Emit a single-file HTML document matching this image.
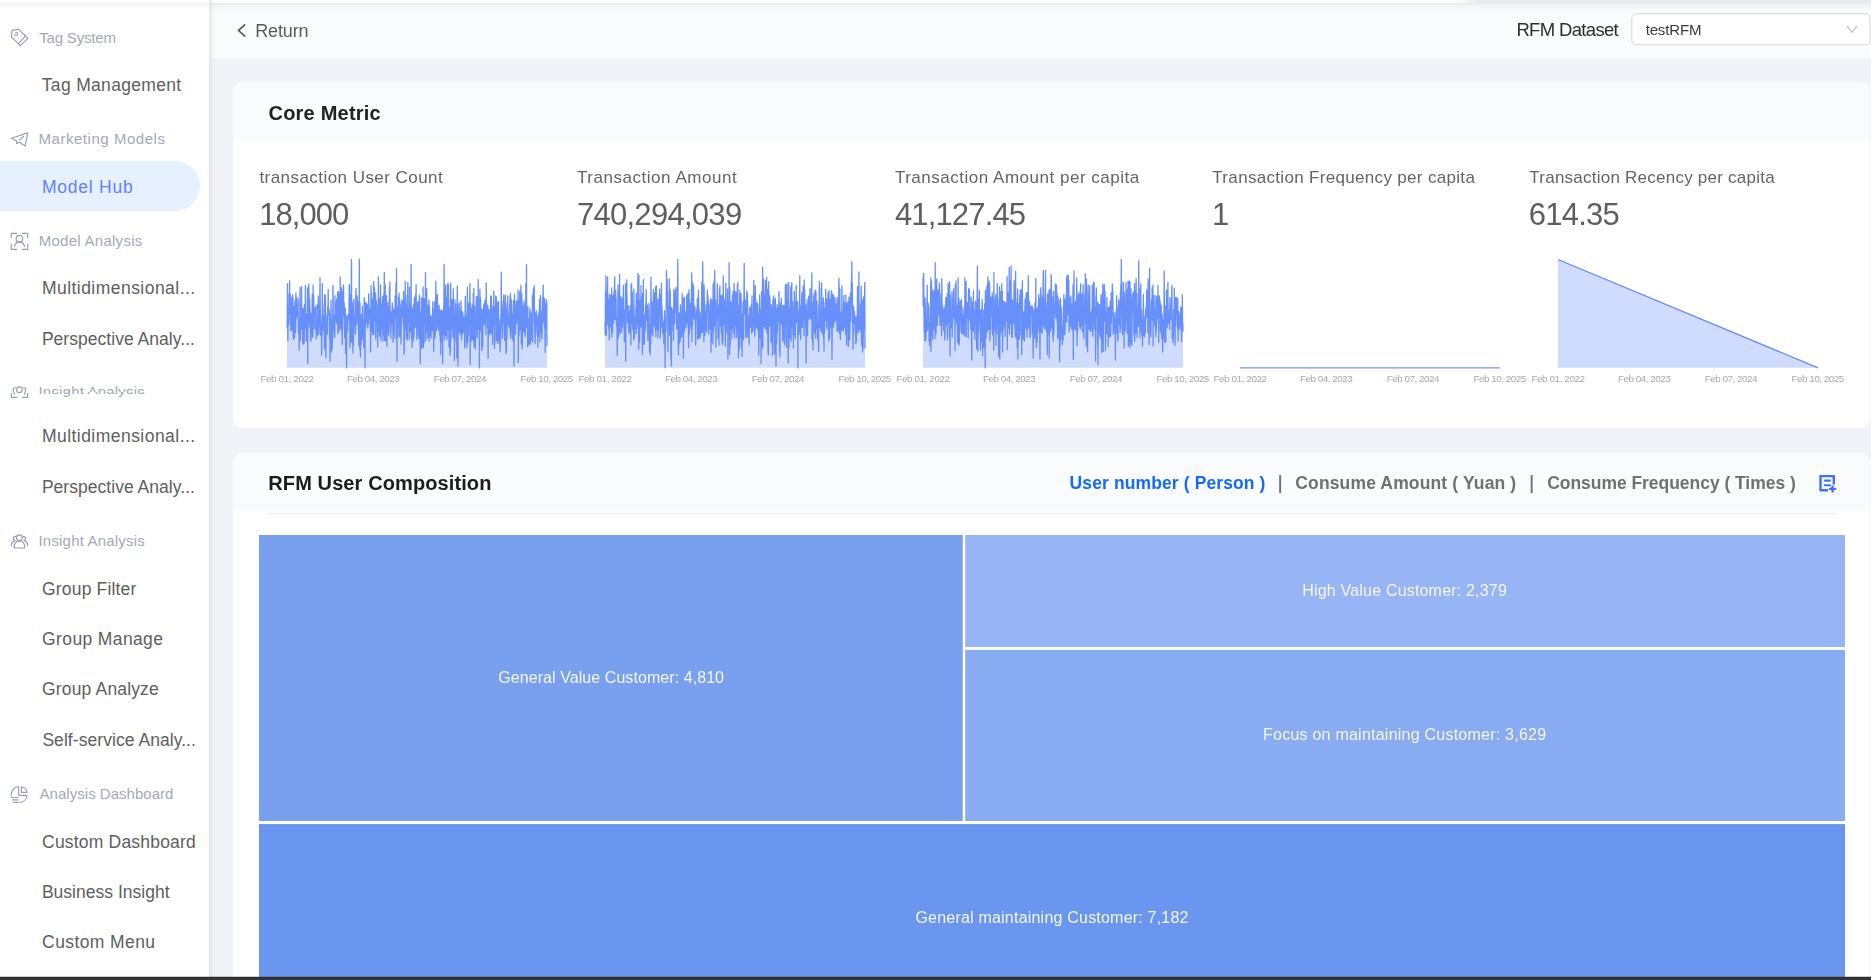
<!DOCTYPE html>
<html><head><meta charset="utf-8"><title>RFM Model</title>
<style>
html,body{margin:0;padding:0;overflow:hidden;}
html{width:1871px;height:980px;}
body{width:1871px;height:980px;overflow:hidden;position:relative;background:#f2f3f8;font-family:"Liberation Sans",sans-serif;}
.t{position:absolute;white-space:nowrap;}
.abs{position:absolute;}
#side{left:0;top:0;width:209px;height:980px;background:#fff;}
#topbar{left:209px;top:3px;width:1662px;height:54.6px;background:#fafbfd;}
.card{left:233.4px;width:1636.8px;background:#fff;border-radius:10px;overflow:hidden;}
.chead{left:0;top:0;width:100%;background:#fafbfc;}
</style></head><body>
<div id="side" class="abs"></div>
<div class="abs" style="left:0;top:161px;width:200px;height:50px;background:#e6f0ff;border-radius:0 25px 25px 0;"></div>
<div class="abs" style="left:209px;top:0;width:1662px;height:3px;background:#fff;"></div>
<div id="topbar" class="abs"></div>
<div class="abs" style="left:209px;top:3px;width:1662px;height:8px;background:linear-gradient(#e8e9ec,#f3f4f6 35%,#fafbfd);"></div>
<div class="abs" style="left:1457px;top:0;width:414px;height:3px;background:linear-gradient(90deg,#fff,#ebebeb 20px);"></div>
<div class="abs" style="left:0;top:3px;width:209px;height:5px;background:linear-gradient(#f3f3f4,#fff);"></div>
<div class="abs" style="left:209px;top:0;width:8px;height:977px;background:linear-gradient(90deg,rgba(212,215,228,.55),rgba(215,218,230,.12) 55%,rgba(215,218,230,0));"></div>
<div class="abs card" style="top:82.3px;height:346px;"><div class="abs chead" style="height:58.3px;"></div></div>
<div class="abs card" style="top:453.3px;height:526.7px;border-radius:10px 10px 0 0;"><div class="abs chead" style="height:57.3px;"></div></div>
<div class="abs" style="left:268.3px;top:513px;width:1567.7px;height:1px;background:#ededed;"></div>
<svg class="abs" style="left:0;top:0;" width="1871" height="980" viewBox="0 0 1871 980">
<rect x="259" y="535" width="703.75" height="286" fill="#79a0ef"/><rect x="965.2" y="535" width="879.8" height="112" fill="#97b4f4"/><rect x="965.2" y="649.9" width="879.8" height="171.1" fill="#88abf2"/><rect x="259" y="824.05" width="1586" height="186" fill="#6b96ef"/>
<path d="M287.0 327.8 L287.2 323.9 L287.5 283.7 L287.7 326.5 L287.9 341.0 L288.2 313.9 L288.4 316.4 L288.6 307.3 L288.9 324.6 L289.1 293.7 L289.4 308.5 L289.6 280.8 L289.8 309.0 L290.1 314.3 L290.3 294.4 L290.5 303.6 L290.8 330.5 L291.0 304.8 L291.2 329.0 L291.5 297.6 L291.7 327.6 L291.9 312.5 L292.2 330.8 L292.4 312.9 L292.7 294.8 L292.9 298.8 L293.1 328.6 L293.4 339.4 L293.6 306.5 L293.8 329.3 L294.1 330.6 L294.3 306.8 L294.5 337.7 L294.8 304.8 L295.0 300.1 L295.2 318.3 L295.5 332.7 L295.7 322.1 L295.9 292.8 L296.2 315.4 L296.4 297.2 L296.7 317.8 L296.9 316.5 L297.1 315.4 L297.4 316.4 L297.6 313.4 L297.8 304.0 L298.1 298.1 L298.3 321.0 L298.5 333.3 L298.8 329.0 L299.0 333.1 L299.2 350.0 L299.5 318.7 L299.7 330.6 L300.0 287.3 L300.2 327.4 L300.4 340.5 L300.7 312.0 L300.9 318.8 L301.1 303.7 L301.4 315.9 L301.6 286.4 L301.8 329.4 L302.1 314.6 L302.3 325.5 L302.5 326.3 L302.8 344.2 L303.0 308.1 L303.2 344.1 L303.5 312.3 L303.7 310.8 L304.0 311.7 L304.2 343.0 L304.4 304.7 L304.7 329.4 L304.9 311.9 L305.1 324.4 L305.4 285.3 L305.6 327.4 L305.8 322.0 L306.1 313.7 L306.3 341.2 L306.5 326.0 L306.8 322.1 L307.0 314.3 L307.3 324.1 L307.5 287.9 L307.7 363.5 L308.0 297.5 L308.2 319.1 L308.4 307.6 L308.7 284.2 L308.9 288.1 L309.1 307.0 L309.4 326.8 L309.6 298.7 L309.8 305.1 L310.1 317.0 L310.3 320.6 L310.6 339.1 L310.8 341.2 L311.0 338.1 L311.3 313.4 L311.5 314.9 L311.7 329.6 L312.0 322.3 L312.2 294.4 L312.4 336.8 L312.7 325.1 L312.9 337.1 L313.1 285.1 L313.4 324.5 L313.6 294.2 L313.8 305.5 L314.1 328.5 L314.3 307.8 L314.6 315.1 L314.8 310.3 L315.0 315.2 L315.3 307.8 L315.5 308.4 L315.7 330.4 L316.0 305.6 L316.2 330.7 L316.4 338.7 L316.7 324.6 L316.9 332.4 L317.1 329.0 L317.4 335.4 L317.6 304.2 L317.9 303.7 L318.1 328.5 L318.3 295.9 L318.6 320.1 L318.8 330.3 L319.0 334.4 L319.3 311.6 L319.5 320.3 L319.7 314.4 L320.0 277.7 L320.2 302.7 L320.4 320.1 L320.7 335.3 L320.9 325.1 L321.1 329.5 L321.4 328.2 L321.6 355.1 L321.9 316.3 L322.1 335.8 L322.3 283.4 L322.6 322.6 L322.8 302.7 L323.0 312.8 L323.3 330.7 L323.5 315.0 L323.7 325.3 L324.0 324.7 L324.2 319.6 L324.4 349.0 L324.7 294.9 L324.9 309.2 L325.2 321.2 L325.4 295.0 L325.6 334.1 L325.9 357.8 L326.1 314.5 L326.3 332.2 L326.6 320.1 L326.8 327.5 L327.0 322.6 L327.3 334.4 L327.5 320.1 L327.7 306.6 L328.0 312.8 L328.2 289.4 L328.4 308.9 L328.7 312.1 L328.9 315.5 L329.2 309.8 L329.4 321.6 L329.6 339.1 L329.9 335.7 L330.1 361.3 L330.3 323.1 L330.6 317.6 L330.8 311.4 L331.0 300.1 L331.3 326.4 L331.5 352.2 L331.7 329.9 L332.0 319.8 L332.2 348.7 L332.5 338.5 L332.7 336.5 L332.9 285.3 L333.2 300.7 L333.4 330.4 L333.6 327.0 L333.9 318.0 L334.1 315.3 L334.3 315.9 L334.6 337.4 L334.8 334.5 L335.0 296.0 L335.3 319.9 L335.5 301.8 L335.8 319.7 L336.0 315.1 L336.2 314.6 L336.5 323.5 L336.7 298.8 L336.9 304.9 L337.2 320.2 L337.4 316.5 L337.6 292.0 L337.9 333.9 L338.1 305.1 L338.3 299.8 L338.6 292.0 L338.8 294.2 L339.0 331.4 L339.3 305.0 L339.5 324.4 L339.8 304.9 L340.0 316.1 L340.2 276.8 L340.5 329.3 L340.7 316.1 L340.9 309.8 L341.2 309.7 L341.4 303.4 L341.6 287.6 L341.9 333.2 L342.1 317.7 L342.3 344.5 L342.6 308.4 L342.8 291.6 L343.1 315.7 L343.3 298.6 L343.5 284.8 L343.8 311.6 L344.0 303.3 L344.2 302.6 L344.5 330.5 L344.7 337.6 L344.9 325.1 L345.2 332.3 L345.4 308.5 L345.6 353.6 L345.9 350.4 L346.1 347.5 L346.3 315.7 L346.6 367.8 L346.8 322.2 L347.1 324.9 L347.3 326.8 L347.5 331.5 L347.8 315.9 L348.0 322.7 L348.2 314.3 L348.5 320.6 L348.7 317.9 L348.9 318.6 L349.2 284.8 L349.4 284.7 L349.6 299.7 L349.9 348.1 L350.1 309.0 L350.4 295.2 L350.6 311.4 L350.8 342.5 L351.1 324.0 L351.3 280.4 L351.5 259.5 L351.8 341.9 L352.0 322.4 L352.2 302.4 L352.5 318.1 L352.7 337.3 L352.9 353.0 L353.2 316.2 L353.4 345.4 L353.6 303.0 L353.9 299.1 L354.1 313.0 L354.4 319.6 L354.6 321.2 L354.8 323.2 L355.1 330.8 L355.3 334.0 L355.5 334.1 L355.8 292.4 L356.0 288.3 L356.2 318.6 L356.5 309.9 L356.7 324.2 L356.9 316.9 L357.2 295.9 L357.4 302.0 L357.7 301.7 L357.9 306.9 L358.1 305.0 L358.4 330.1 L358.6 306.5 L358.8 345.3 L359.1 315.6 L359.3 259.5 L359.5 311.8 L359.8 348.8 L360.0 302.9 L360.2 338.2 L360.5 357.2 L360.7 321.4 L360.9 320.7 L361.2 344.7 L361.4 314.2 L361.7 321.7 L361.9 320.2 L362.1 339.1 L362.4 306.1 L362.6 318.0 L362.8 323.0 L363.1 337.3 L363.3 330.6 L363.5 323.8 L363.8 347.5 L364.0 331.8 L364.2 297.7 L364.5 321.5 L364.7 319.8 L365.0 367.8 L365.2 305.2 L365.4 302.3 L365.7 315.1 L365.9 325.8 L366.1 307.1 L366.4 303.1 L366.6 321.9 L366.8 310.3 L367.1 309.4 L367.3 304.1 L367.5 316.3 L367.8 328.0 L368.0 316.8 L368.2 324.7 L368.5 319.2 L368.7 293.8 L369.0 304.1 L369.2 318.4 L369.4 312.1 L369.7 308.9 L369.9 311.5 L370.1 324.9 L370.4 325.3 L370.6 351.8 L370.8 318.2 L371.1 285.4 L371.3 330.3 L371.5 292.7 L371.8 331.4 L372.0 325.9 L372.3 299.3 L372.5 334.4 L372.7 327.4 L373.0 299.0 L373.2 322.5 L373.4 305.7 L373.7 281.3 L373.9 334.7 L374.1 298.4 L374.4 287.4 L374.6 319.6 L374.8 321.3 L375.1 304.9 L375.3 307.6 L375.6 292.8 L375.8 339.1 L376.0 319.2 L376.3 300.6 L376.5 308.7 L376.7 323.8 L377.0 305.1 L377.2 308.3 L377.4 332.1 L377.7 347.0 L377.9 317.2 L378.1 320.7 L378.4 276.8 L378.6 311.1 L378.8 331.8 L379.1 327.8 L379.3 298.3 L379.6 328.9 L379.8 336.4 L380.0 334.3 L380.3 309.0 L380.5 285.0 L380.7 298.8 L381.0 340.7 L381.2 316.9 L381.4 328.2 L381.7 303.8 L381.9 313.8 L382.1 321.2 L382.4 329.0 L382.6 296.3 L382.9 341.0 L383.1 324.8 L383.3 335.5 L383.6 301.0 L383.8 294.0 L384.0 309.8 L384.3 272.5 L384.5 317.8 L384.7 340.6 L385.0 316.0 L385.2 285.0 L385.4 325.9 L385.7 303.0 L385.9 340.9 L386.1 309.1 L386.4 295.6 L386.6 313.2 L386.9 346.2 L387.1 316.7 L387.3 332.2 L387.6 302.6 L387.8 313.3 L388.0 320.1 L388.3 314.1 L388.5 335.5 L388.7 322.8 L389.0 306.1 L389.2 312.4 L389.4 287.0 L389.7 306.3 L389.9 281.9 L390.2 331.4 L390.4 320.4 L390.6 314.4 L390.9 338.6 L391.1 312.0 L391.3 324.7 L391.6 320.3 L391.8 322.4 L392.0 311.9 L392.3 303.0 L392.5 323.8 L392.7 306.3 L393.0 341.9 L393.2 329.7 L393.4 334.7 L393.7 308.9 L393.9 316.6 L394.2 329.7 L394.4 315.4 L394.6 319.1 L394.9 338.6 L395.1 296.1 L395.3 317.7 L395.6 303.9 L395.8 297.1 L396.0 282.4 L396.3 314.1 L396.5 268.5 L396.7 327.5 L397.0 361.3 L397.2 307.1 L397.5 317.7 L397.7 324.5 L397.9 336.8 L398.2 323.7 L398.4 297.3 L398.6 305.6 L398.9 311.4 L399.1 293.2 L399.3 300.8 L399.6 336.9 L399.8 301.0 L400.0 327.1 L400.3 304.0 L400.5 329.5 L400.8 324.4 L401.0 344.0 L401.2 326.7 L401.5 309.0 L401.7 314.0 L401.9 299.6 L402.2 316.6 L402.4 303.2 L402.6 305.9 L402.9 308.1 L403.1 301.5 L403.3 324.1 L403.6 291.4 L403.8 301.9 L404.0 354.3 L404.3 350.0 L404.5 310.9 L404.8 309.1 L405.0 329.5 L405.2 281.5 L405.5 323.8 L405.7 303.5 L405.9 295.4 L406.2 327.1 L406.4 338.5 L406.6 322.0 L406.9 330.9 L407.1 305.4 L407.3 340.0 L407.6 301.1 L407.8 282.5 L408.1 319.6 L408.3 324.2 L408.5 308.9 L408.8 317.0 L409.0 331.8 L409.2 339.7 L409.5 287.1 L409.7 332.2 L409.9 315.9 L410.2 308.4 L410.4 304.5 L410.6 310.5 L410.9 332.2 L411.1 264.4 L411.3 309.0 L411.6 337.9 L411.8 307.8 L412.1 347.6 L412.3 317.1 L412.5 337.2 L412.8 334.9 L413.0 307.7 L413.2 340.9 L413.5 312.8 L413.7 303.8 L413.9 337.3 L414.2 319.6 L414.4 297.2 L414.6 326.5 L414.9 316.7 L415.1 304.4 L415.4 307.6 L415.6 294.4 L415.8 327.6 L416.1 284.6 L416.3 306.0 L416.5 322.3 L416.8 339.4 L417.0 304.4 L417.2 318.5 L417.5 327.8 L417.7 302.2 L417.9 301.9 L418.2 302.4 L418.4 335.6 L418.6 333.1 L418.9 338.4 L419.1 318.3 L419.4 295.0 L419.6 298.3 L419.8 296.6 L420.1 340.9 L420.3 363.5 L420.5 330.3 L420.8 320.4 L421.0 313.8 L421.2 311.6 L421.5 348.4 L421.7 297.9 L421.9 327.0 L422.2 309.1 L422.4 347.0 L422.7 314.4 L422.9 314.7 L423.1 286.9 L423.4 347.3 L423.6 323.5 L423.8 339.7 L424.1 342.9 L424.3 298.7 L424.5 320.2 L424.8 313.5 L425.0 317.1 L425.2 324.1 L425.5 272.5 L425.7 340.5 L425.9 305.1 L426.2 307.4 L426.4 322.9 L426.7 288.6 L426.9 316.5 L427.1 332.4 L427.4 310.3 L427.6 306.2 L427.8 338.3 L428.1 310.5 L428.3 304.9 L428.5 323.4 L428.8 304.8 L429.0 300.0 L429.2 341.3 L429.5 306.5 L429.7 329.1 L430.0 335.3 L430.2 314.6 L430.4 328.2 L430.7 316.9 L430.9 328.5 L431.1 338.2 L431.4 316.3 L431.6 326.2 L431.8 321.1 L432.1 331.0 L432.3 315.6 L432.5 321.7 L432.8 301.6 L433.0 327.9 L433.2 313.1 L433.5 332.9 L433.7 351.3 L434.0 308.9 L434.2 322.1 L434.4 317.1 L434.7 301.8 L434.9 338.4 L435.1 332.1 L435.4 334.0 L435.6 328.5 L435.8 281.1 L436.1 319.4 L436.3 314.8 L436.5 330.0 L436.8 318.6 L437.0 323.1 L437.3 294.1 L437.5 326.7 L437.7 303.2 L438.0 326.3 L438.2 321.9 L438.4 330.2 L438.7 309.6 L438.9 323.4 L439.1 305.3 L439.4 318.3 L439.6 328.7 L439.8 335.2 L440.1 310.0 L440.3 340.6 L440.6 311.3 L440.8 354.6 L441.0 311.7 L441.3 315.8 L441.5 321.0 L441.7 310.2 L442.0 342.0 L442.2 326.8 L442.4 310.8 L442.7 363.5 L442.9 319.0 L443.1 315.9 L443.4 320.2 L443.6 305.8 L443.8 334.3 L444.1 264.4 L444.3 301.1 L444.6 311.0 L444.8 339.8 L445.0 313.8 L445.3 293.8 L445.5 285.2 L445.7 322.2 L446.0 297.0 L446.2 335.4 L446.4 307.2 L446.7 301.8 L446.9 333.4 L447.1 339.3 L447.4 284.7 L447.6 299.8 L447.9 283.3 L448.1 324.3 L448.3 329.1 L448.6 285.3 L448.8 321.7 L449.0 346.6 L449.3 320.5 L449.5 307.7 L449.7 311.5 L450.0 355.1 L450.2 313.6 L450.4 351.2 L450.7 283.2 L450.9 340.2 L451.1 330.7 L451.4 317.3 L451.6 327.0 L451.9 299.2 L452.1 329.0 L452.3 312.1 L452.6 312.3 L452.8 312.4 L453.0 337.6 L453.3 288.8 L453.5 332.3 L453.7 334.1 L454.0 323.9 L454.2 315.5 L454.4 360.8 L454.7 325.5 L454.9 299.8 L455.2 315.3 L455.4 315.6 L455.6 303.8 L455.9 312.9 L456.1 341.5 L456.3 339.4 L456.6 319.0 L456.8 358.1 L457.0 320.0 L457.3 285.8 L457.5 325.4 L457.7 304.2 L458.0 366.2 L458.2 332.8 L458.4 324.2 L458.7 317.8 L458.9 332.2 L459.2 302.7 L459.4 322.6 L459.6 327.1 L459.9 321.0 L460.1 309.1 L460.3 334.2 L460.6 320.3 L460.8 326.6 L461.0 300.7 L461.3 318.6 L461.5 340.0 L461.7 320.6 L462.0 334.4 L462.2 311.5 L462.5 322.4 L462.7 312.2 L462.9 315.7 L463.2 332.4 L463.4 317.2 L463.6 318.4 L463.9 317.1 L464.1 317.7 L464.3 324.2 L464.6 345.8 L464.8 348.0 L465.0 319.3 L465.3 296.4 L465.5 305.5 L465.8 329.9 L466.0 315.1 L466.2 321.0 L466.5 342.7 L466.7 330.6 L466.9 347.5 L467.2 317.8 L467.4 286.9 L467.6 322.5 L467.9 342.1 L468.1 315.6 L468.3 302.7 L468.6 334.4 L468.8 308.0 L469.0 315.7 L469.3 324.8 L469.5 323.9 L469.8 294.5 L470.0 283.4 L470.2 364.5 L470.5 319.6 L470.7 303.5 L470.9 341.7 L471.2 328.8 L471.4 313.1 L471.6 308.1 L471.9 314.2 L472.1 339.8 L472.3 318.6 L472.6 308.1 L472.8 303.9 L473.1 340.2 L473.3 293.4 L473.5 327.7 L473.8 288.2 L474.0 341.0 L474.2 347.1 L474.5 321.3 L474.7 305.8 L474.9 330.8 L475.2 318.0 L475.4 349.1 L475.6 341.5 L475.9 328.8 L476.1 321.0 L476.3 296.4 L476.6 311.2 L476.8 321.0 L477.1 318.3 L477.3 337.4 L477.5 296.7 L477.8 328.7 L478.0 328.8 L478.2 279.6 L478.5 329.7 L478.7 307.0 L478.9 317.0 L479.2 329.7 L479.4 367.8 L479.6 311.9 L479.9 289.3 L480.1 302.8 L480.4 329.2 L480.6 297.4 L480.8 323.5 L481.1 331.6 L481.3 332.3 L481.5 308.7 L481.8 350.4 L482.0 336.3 L482.2 319.2 L482.5 310.3 L482.7 347.1 L482.9 324.0 L483.2 326.6 L483.4 307.9 L483.6 307.4 L483.9 303.9 L484.1 314.6 L484.4 324.1 L484.6 312.4 L484.8 304.1 L485.1 300.1 L485.3 309.8 L485.5 325.8 L485.8 321.8 L486.0 334.5 L486.2 282.9 L486.5 316.4 L486.7 304.1 L486.9 306.6 L487.2 305.3 L487.4 317.6 L487.7 328.0 L487.9 305.9 L488.1 358.4 L488.4 324.3 L488.6 331.7 L488.8 329.9 L489.1 309.7 L489.3 333.6 L489.5 324.2 L489.8 334.7 L490.0 319.2 L490.2 325.8 L490.5 306.8 L490.7 295.8 L490.9 319.9 L491.2 333.4 L491.4 296.5 L491.7 313.1 L491.9 305.8 L492.1 308.8 L492.4 308.2 L492.6 344.5 L492.8 315.6 L493.1 325.5 L493.3 319.5 L493.5 322.8 L493.8 291.2 L494.0 321.7 L494.2 314.2 L494.5 348.7 L494.7 306.8 L495.0 342.3 L495.2 313.4 L495.4 321.4 L495.7 295.8 L495.9 306.4 L496.1 296.5 L496.4 298.4 L496.6 340.9 L496.8 304.6 L497.1 302.1 L497.3 305.8 L497.5 324.0 L497.8 343.4 L498.0 313.7 L498.2 307.6 L498.5 301.7 L498.7 340.9 L499.0 322.0 L499.2 319.2 L499.4 324.1 L499.7 344.0 L499.9 343.4 L500.1 351.8 L500.4 337.7 L500.6 339.8 L500.8 318.9 L501.1 305.1 L501.3 272.2 L501.5 326.2 L501.8 300.5 L502.0 304.2 L502.3 327.2 L502.5 338.2 L502.7 329.9 L503.0 308.8 L503.2 310.8 L503.4 323.0 L503.7 295.2 L503.9 304.1 L504.1 302.4 L504.4 317.6 L504.6 340.3 L504.8 327.4 L505.1 320.0 L505.3 294.9 L505.6 334.6 L505.8 342.4 L506.0 353.7 L506.3 312.1 L506.5 351.2 L506.7 307.6 L507.0 338.6 L507.2 302.6 L507.4 324.6 L507.7 296.0 L507.9 319.1 L508.1 324.5 L508.4 318.0 L508.6 325.3 L508.8 316.7 L509.1 327.2 L509.3 318.1 L509.6 304.3 L509.8 320.7 L510.0 295.9 L510.3 335.5 L510.5 293.4 L510.7 338.2 L511.0 298.9 L511.2 326.6 L511.4 300.0 L511.7 331.1 L511.9 326.4 L512.1 313.7 L512.4 339.8 L512.6 340.1 L512.9 326.5 L513.1 317.1 L513.3 304.3 L513.6 300.6 L513.8 335.5 L514.0 366.2 L514.3 306.0 L514.5 294.1 L514.7 327.4 L515.0 306.8 L515.2 307.5 L515.4 334.3 L515.7 305.6 L515.9 324.0 L516.1 300.9 L516.4 312.8 L516.6 323.9 L516.9 301.3 L517.1 308.2 L517.3 303.0 L517.6 317.4 L517.8 318.9 L518.0 289.9 L518.3 362.4 L518.5 300.1 L518.7 301.7 L519.0 335.7 L519.2 326.7 L519.4 312.2 L519.7 291.7 L519.9 327.7 L520.2 323.4 L520.4 329.9 L520.6 317.0 L520.9 285.1 L521.1 303.4 L521.3 344.1 L521.6 327.1 L521.8 293.7 L522.0 304.8 L522.3 348.7 L522.5 320.3 L522.7 324.5 L523.0 306.0 L523.2 314.5 L523.4 314.5 L523.7 332.2 L523.9 300.9 L524.2 313.2 L524.4 309.9 L524.6 304.1 L524.9 323.9 L525.1 336.3 L525.3 336.6 L525.6 323.8 L525.8 283.5 L526.0 327.1 L526.3 326.7 L526.5 264.4 L526.7 321.9 L527.0 327.1 L527.2 311.5 L527.5 318.6 L527.7 346.8 L527.9 306.7 L528.2 345.4 L528.4 318.7 L528.6 342.9 L528.9 323.7 L529.1 343.5 L529.3 322.0 L529.6 326.5 L529.8 308.5 L530.0 310.6 L530.3 344.6 L530.5 312.5 L530.8 341.0 L531.0 313.1 L531.2 338.2 L531.5 331.1 L531.7 339.0 L531.9 322.5 L532.2 316.3 L532.4 295.3 L532.6 342.3 L532.9 326.3 L533.1 302.9 L533.3 288.9 L533.6 293.5 L533.8 303.1 L534.0 310.7 L534.3 285.8 L534.5 313.6 L534.8 327.5 L535.0 343.7 L535.2 339.5 L535.5 329.8 L535.7 313.0 L535.9 322.7 L536.2 320.0 L536.4 310.8 L536.6 324.9 L536.9 317.9 L537.1 332.5 L537.3 334.8 L537.6 324.5 L537.8 347.0 L538.1 314.7 L538.3 317.1 L538.5 336.3 L538.8 312.1 L539.0 322.3 L539.2 332.4 L539.5 299.7 L539.7 326.3 L539.9 341.8 L540.2 317.2 L540.4 295.5 L540.6 332.3 L540.9 310.7 L541.1 325.2 L541.3 316.2 L541.6 316.7 L541.8 338.8 L542.1 333.4 L542.3 311.2 L542.5 297.3 L542.8 313.2 L543.0 297.1 L543.2 285.2 L543.5 322.7 L543.7 320.0 L543.9 313.1 L544.2 318.2 L544.4 298.1 L544.6 327.9 L544.9 303.5 L545.1 352.3 L545.4 322.3 L545.6 328.5 L545.8 305.3 L546.1 327.4 L546.3 299.6 L546.5 308.0 L546.8 301.9 L547.0 346.1 L547.0 367.8 L287.0 367.8 Z" fill="#5580f8" fill-opacity="0.28" stroke="none"/><path d="M287.0 327.8 L287.2 323.9 L287.5 283.7 L287.7 326.5 L287.9 341.0 L288.2 313.9 L288.4 316.4 L288.6 307.3 L288.9 324.6 L289.1 293.7 L289.4 308.5 L289.6 280.8 L289.8 309.0 L290.1 314.3 L290.3 294.4 L290.5 303.6 L290.8 330.5 L291.0 304.8 L291.2 329.0 L291.5 297.6 L291.7 327.6 L291.9 312.5 L292.2 330.8 L292.4 312.9 L292.7 294.8 L292.9 298.8 L293.1 328.6 L293.4 339.4 L293.6 306.5 L293.8 329.3 L294.1 330.6 L294.3 306.8 L294.5 337.7 L294.8 304.8 L295.0 300.1 L295.2 318.3 L295.5 332.7 L295.7 322.1 L295.9 292.8 L296.2 315.4 L296.4 297.2 L296.7 317.8 L296.9 316.5 L297.1 315.4 L297.4 316.4 L297.6 313.4 L297.8 304.0 L298.1 298.1 L298.3 321.0 L298.5 333.3 L298.8 329.0 L299.0 333.1 L299.2 350.0 L299.5 318.7 L299.7 330.6 L300.0 287.3 L300.2 327.4 L300.4 340.5 L300.7 312.0 L300.9 318.8 L301.1 303.7 L301.4 315.9 L301.6 286.4 L301.8 329.4 L302.1 314.6 L302.3 325.5 L302.5 326.3 L302.8 344.2 L303.0 308.1 L303.2 344.1 L303.5 312.3 L303.7 310.8 L304.0 311.7 L304.2 343.0 L304.4 304.7 L304.7 329.4 L304.9 311.9 L305.1 324.4 L305.4 285.3 L305.6 327.4 L305.8 322.0 L306.1 313.7 L306.3 341.2 L306.5 326.0 L306.8 322.1 L307.0 314.3 L307.3 324.1 L307.5 287.9 L307.7 363.5 L308.0 297.5 L308.2 319.1 L308.4 307.6 L308.7 284.2 L308.9 288.1 L309.1 307.0 L309.4 326.8 L309.6 298.7 L309.8 305.1 L310.1 317.0 L310.3 320.6 L310.6 339.1 L310.8 341.2 L311.0 338.1 L311.3 313.4 L311.5 314.9 L311.7 329.6 L312.0 322.3 L312.2 294.4 L312.4 336.8 L312.7 325.1 L312.9 337.1 L313.1 285.1 L313.4 324.5 L313.6 294.2 L313.8 305.5 L314.1 328.5 L314.3 307.8 L314.6 315.1 L314.8 310.3 L315.0 315.2 L315.3 307.8 L315.5 308.4 L315.7 330.4 L316.0 305.6 L316.2 330.7 L316.4 338.7 L316.7 324.6 L316.9 332.4 L317.1 329.0 L317.4 335.4 L317.6 304.2 L317.9 303.7 L318.1 328.5 L318.3 295.9 L318.6 320.1 L318.8 330.3 L319.0 334.4 L319.3 311.6 L319.5 320.3 L319.7 314.4 L320.0 277.7 L320.2 302.7 L320.4 320.1 L320.7 335.3 L320.9 325.1 L321.1 329.5 L321.4 328.2 L321.6 355.1 L321.9 316.3 L322.1 335.8 L322.3 283.4 L322.6 322.6 L322.8 302.7 L323.0 312.8 L323.3 330.7 L323.5 315.0 L323.7 325.3 L324.0 324.7 L324.2 319.6 L324.4 349.0 L324.7 294.9 L324.9 309.2 L325.2 321.2 L325.4 295.0 L325.6 334.1 L325.9 357.8 L326.1 314.5 L326.3 332.2 L326.6 320.1 L326.8 327.5 L327.0 322.6 L327.3 334.4 L327.5 320.1 L327.7 306.6 L328.0 312.8 L328.2 289.4 L328.4 308.9 L328.7 312.1 L328.9 315.5 L329.2 309.8 L329.4 321.6 L329.6 339.1 L329.9 335.7 L330.1 361.3 L330.3 323.1 L330.6 317.6 L330.8 311.4 L331.0 300.1 L331.3 326.4 L331.5 352.2 L331.7 329.9 L332.0 319.8 L332.2 348.7 L332.5 338.5 L332.7 336.5 L332.9 285.3 L333.2 300.7 L333.4 330.4 L333.6 327.0 L333.9 318.0 L334.1 315.3 L334.3 315.9 L334.6 337.4 L334.8 334.5 L335.0 296.0 L335.3 319.9 L335.5 301.8 L335.8 319.7 L336.0 315.1 L336.2 314.6 L336.5 323.5 L336.7 298.8 L336.9 304.9 L337.2 320.2 L337.4 316.5 L337.6 292.0 L337.9 333.9 L338.1 305.1 L338.3 299.8 L338.6 292.0 L338.8 294.2 L339.0 331.4 L339.3 305.0 L339.5 324.4 L339.8 304.9 L340.0 316.1 L340.2 276.8 L340.5 329.3 L340.7 316.1 L340.9 309.8 L341.2 309.7 L341.4 303.4 L341.6 287.6 L341.9 333.2 L342.1 317.7 L342.3 344.5 L342.6 308.4 L342.8 291.6 L343.1 315.7 L343.3 298.6 L343.5 284.8 L343.8 311.6 L344.0 303.3 L344.2 302.6 L344.5 330.5 L344.7 337.6 L344.9 325.1 L345.2 332.3 L345.4 308.5 L345.6 353.6 L345.9 350.4 L346.1 347.5 L346.3 315.7 L346.6 367.8 L346.8 322.2 L347.1 324.9 L347.3 326.8 L347.5 331.5 L347.8 315.9 L348.0 322.7 L348.2 314.3 L348.5 320.6 L348.7 317.9 L348.9 318.6 L349.2 284.8 L349.4 284.7 L349.6 299.7 L349.9 348.1 L350.1 309.0 L350.4 295.2 L350.6 311.4 L350.8 342.5 L351.1 324.0 L351.3 280.4 L351.5 259.5 L351.8 341.9 L352.0 322.4 L352.2 302.4 L352.5 318.1 L352.7 337.3 L352.9 353.0 L353.2 316.2 L353.4 345.4 L353.6 303.0 L353.9 299.1 L354.1 313.0 L354.4 319.6 L354.6 321.2 L354.8 323.2 L355.1 330.8 L355.3 334.0 L355.5 334.1 L355.8 292.4 L356.0 288.3 L356.2 318.6 L356.5 309.9 L356.7 324.2 L356.9 316.9 L357.2 295.9 L357.4 302.0 L357.7 301.7 L357.9 306.9 L358.1 305.0 L358.4 330.1 L358.6 306.5 L358.8 345.3 L359.1 315.6 L359.3 259.5 L359.5 311.8 L359.8 348.8 L360.0 302.9 L360.2 338.2 L360.5 357.2 L360.7 321.4 L360.9 320.7 L361.2 344.7 L361.4 314.2 L361.7 321.7 L361.9 320.2 L362.1 339.1 L362.4 306.1 L362.6 318.0 L362.8 323.0 L363.1 337.3 L363.3 330.6 L363.5 323.8 L363.8 347.5 L364.0 331.8 L364.2 297.7 L364.5 321.5 L364.7 319.8 L365.0 367.8 L365.2 305.2 L365.4 302.3 L365.7 315.1 L365.9 325.8 L366.1 307.1 L366.4 303.1 L366.6 321.9 L366.8 310.3 L367.1 309.4 L367.3 304.1 L367.5 316.3 L367.8 328.0 L368.0 316.8 L368.2 324.7 L368.5 319.2 L368.7 293.8 L369.0 304.1 L369.2 318.4 L369.4 312.1 L369.7 308.9 L369.9 311.5 L370.1 324.9 L370.4 325.3 L370.6 351.8 L370.8 318.2 L371.1 285.4 L371.3 330.3 L371.5 292.7 L371.8 331.4 L372.0 325.9 L372.3 299.3 L372.5 334.4 L372.7 327.4 L373.0 299.0 L373.2 322.5 L373.4 305.7 L373.7 281.3 L373.9 334.7 L374.1 298.4 L374.4 287.4 L374.6 319.6 L374.8 321.3 L375.1 304.9 L375.3 307.6 L375.6 292.8 L375.8 339.1 L376.0 319.2 L376.3 300.6 L376.5 308.7 L376.7 323.8 L377.0 305.1 L377.2 308.3 L377.4 332.1 L377.7 347.0 L377.9 317.2 L378.1 320.7 L378.4 276.8 L378.6 311.1 L378.8 331.8 L379.1 327.8 L379.3 298.3 L379.6 328.9 L379.8 336.4 L380.0 334.3 L380.3 309.0 L380.5 285.0 L380.7 298.8 L381.0 340.7 L381.2 316.9 L381.4 328.2 L381.7 303.8 L381.9 313.8 L382.1 321.2 L382.4 329.0 L382.6 296.3 L382.9 341.0 L383.1 324.8 L383.3 335.5 L383.6 301.0 L383.8 294.0 L384.0 309.8 L384.3 272.5 L384.5 317.8 L384.7 340.6 L385.0 316.0 L385.2 285.0 L385.4 325.9 L385.7 303.0 L385.9 340.9 L386.1 309.1 L386.4 295.6 L386.6 313.2 L386.9 346.2 L387.1 316.7 L387.3 332.2 L387.6 302.6 L387.8 313.3 L388.0 320.1 L388.3 314.1 L388.5 335.5 L388.7 322.8 L389.0 306.1 L389.2 312.4 L389.4 287.0 L389.7 306.3 L389.9 281.9 L390.2 331.4 L390.4 320.4 L390.6 314.4 L390.9 338.6 L391.1 312.0 L391.3 324.7 L391.6 320.3 L391.8 322.4 L392.0 311.9 L392.3 303.0 L392.5 323.8 L392.7 306.3 L393.0 341.9 L393.2 329.7 L393.4 334.7 L393.7 308.9 L393.9 316.6 L394.2 329.7 L394.4 315.4 L394.6 319.1 L394.9 338.6 L395.1 296.1 L395.3 317.7 L395.6 303.9 L395.8 297.1 L396.0 282.4 L396.3 314.1 L396.5 268.5 L396.7 327.5 L397.0 361.3 L397.2 307.1 L397.5 317.7 L397.7 324.5 L397.9 336.8 L398.2 323.7 L398.4 297.3 L398.6 305.6 L398.9 311.4 L399.1 293.2 L399.3 300.8 L399.6 336.9 L399.8 301.0 L400.0 327.1 L400.3 304.0 L400.5 329.5 L400.8 324.4 L401.0 344.0 L401.2 326.7 L401.5 309.0 L401.7 314.0 L401.9 299.6 L402.2 316.6 L402.4 303.2 L402.6 305.9 L402.9 308.1 L403.1 301.5 L403.3 324.1 L403.6 291.4 L403.8 301.9 L404.0 354.3 L404.3 350.0 L404.5 310.9 L404.8 309.1 L405.0 329.5 L405.2 281.5 L405.5 323.8 L405.7 303.5 L405.9 295.4 L406.2 327.1 L406.4 338.5 L406.6 322.0 L406.9 330.9 L407.1 305.4 L407.3 340.0 L407.6 301.1 L407.8 282.5 L408.1 319.6 L408.3 324.2 L408.5 308.9 L408.8 317.0 L409.0 331.8 L409.2 339.7 L409.5 287.1 L409.7 332.2 L409.9 315.9 L410.2 308.4 L410.4 304.5 L410.6 310.5 L410.9 332.2 L411.1 264.4 L411.3 309.0 L411.6 337.9 L411.8 307.8 L412.1 347.6 L412.3 317.1 L412.5 337.2 L412.8 334.9 L413.0 307.7 L413.2 340.9 L413.5 312.8 L413.7 303.8 L413.9 337.3 L414.2 319.6 L414.4 297.2 L414.6 326.5 L414.9 316.7 L415.1 304.4 L415.4 307.6 L415.6 294.4 L415.8 327.6 L416.1 284.6 L416.3 306.0 L416.5 322.3 L416.8 339.4 L417.0 304.4 L417.2 318.5 L417.5 327.8 L417.7 302.2 L417.9 301.9 L418.2 302.4 L418.4 335.6 L418.6 333.1 L418.9 338.4 L419.1 318.3 L419.4 295.0 L419.6 298.3 L419.8 296.6 L420.1 340.9 L420.3 363.5 L420.5 330.3 L420.8 320.4 L421.0 313.8 L421.2 311.6 L421.5 348.4 L421.7 297.9 L421.9 327.0 L422.2 309.1 L422.4 347.0 L422.7 314.4 L422.9 314.7 L423.1 286.9 L423.4 347.3 L423.6 323.5 L423.8 339.7 L424.1 342.9 L424.3 298.7 L424.5 320.2 L424.8 313.5 L425.0 317.1 L425.2 324.1 L425.5 272.5 L425.7 340.5 L425.9 305.1 L426.2 307.4 L426.4 322.9 L426.7 288.6 L426.9 316.5 L427.1 332.4 L427.4 310.3 L427.6 306.2 L427.8 338.3 L428.1 310.5 L428.3 304.9 L428.5 323.4 L428.8 304.8 L429.0 300.0 L429.2 341.3 L429.5 306.5 L429.7 329.1 L430.0 335.3 L430.2 314.6 L430.4 328.2 L430.7 316.9 L430.9 328.5 L431.1 338.2 L431.4 316.3 L431.6 326.2 L431.8 321.1 L432.1 331.0 L432.3 315.6 L432.5 321.7 L432.8 301.6 L433.0 327.9 L433.2 313.1 L433.5 332.9 L433.7 351.3 L434.0 308.9 L434.2 322.1 L434.4 317.1 L434.7 301.8 L434.9 338.4 L435.1 332.1 L435.4 334.0 L435.6 328.5 L435.8 281.1 L436.1 319.4 L436.3 314.8 L436.5 330.0 L436.8 318.6 L437.0 323.1 L437.3 294.1 L437.5 326.7 L437.7 303.2 L438.0 326.3 L438.2 321.9 L438.4 330.2 L438.7 309.6 L438.9 323.4 L439.1 305.3 L439.4 318.3 L439.6 328.7 L439.8 335.2 L440.1 310.0 L440.3 340.6 L440.6 311.3 L440.8 354.6 L441.0 311.7 L441.3 315.8 L441.5 321.0 L441.7 310.2 L442.0 342.0 L442.2 326.8 L442.4 310.8 L442.7 363.5 L442.9 319.0 L443.1 315.9 L443.4 320.2 L443.6 305.8 L443.8 334.3 L444.1 264.4 L444.3 301.1 L444.6 311.0 L444.8 339.8 L445.0 313.8 L445.3 293.8 L445.5 285.2 L445.7 322.2 L446.0 297.0 L446.2 335.4 L446.4 307.2 L446.7 301.8 L446.9 333.4 L447.1 339.3 L447.4 284.7 L447.6 299.8 L447.9 283.3 L448.1 324.3 L448.3 329.1 L448.6 285.3 L448.8 321.7 L449.0 346.6 L449.3 320.5 L449.5 307.7 L449.7 311.5 L450.0 355.1 L450.2 313.6 L450.4 351.2 L450.7 283.2 L450.9 340.2 L451.1 330.7 L451.4 317.3 L451.6 327.0 L451.9 299.2 L452.1 329.0 L452.3 312.1 L452.6 312.3 L452.8 312.4 L453.0 337.6 L453.3 288.8 L453.5 332.3 L453.7 334.1 L454.0 323.9 L454.2 315.5 L454.4 360.8 L454.7 325.5 L454.9 299.8 L455.2 315.3 L455.4 315.6 L455.6 303.8 L455.9 312.9 L456.1 341.5 L456.3 339.4 L456.6 319.0 L456.8 358.1 L457.0 320.0 L457.3 285.8 L457.5 325.4 L457.7 304.2 L458.0 366.2 L458.2 332.8 L458.4 324.2 L458.7 317.8 L458.9 332.2 L459.2 302.7 L459.4 322.6 L459.6 327.1 L459.9 321.0 L460.1 309.1 L460.3 334.2 L460.6 320.3 L460.8 326.6 L461.0 300.7 L461.3 318.6 L461.5 340.0 L461.7 320.6 L462.0 334.4 L462.2 311.5 L462.5 322.4 L462.7 312.2 L462.9 315.7 L463.2 332.4 L463.4 317.2 L463.6 318.4 L463.9 317.1 L464.1 317.7 L464.3 324.2 L464.6 345.8 L464.8 348.0 L465.0 319.3 L465.3 296.4 L465.5 305.5 L465.8 329.9 L466.0 315.1 L466.2 321.0 L466.5 342.7 L466.7 330.6 L466.9 347.5 L467.2 317.8 L467.4 286.9 L467.6 322.5 L467.9 342.1 L468.1 315.6 L468.3 302.7 L468.6 334.4 L468.8 308.0 L469.0 315.7 L469.3 324.8 L469.5 323.9 L469.8 294.5 L470.0 283.4 L470.2 364.5 L470.5 319.6 L470.7 303.5 L470.9 341.7 L471.2 328.8 L471.4 313.1 L471.6 308.1 L471.9 314.2 L472.1 339.8 L472.3 318.6 L472.6 308.1 L472.8 303.9 L473.1 340.2 L473.3 293.4 L473.5 327.7 L473.8 288.2 L474.0 341.0 L474.2 347.1 L474.5 321.3 L474.7 305.8 L474.9 330.8 L475.2 318.0 L475.4 349.1 L475.6 341.5 L475.9 328.8 L476.1 321.0 L476.3 296.4 L476.6 311.2 L476.8 321.0 L477.1 318.3 L477.3 337.4 L477.5 296.7 L477.8 328.7 L478.0 328.8 L478.2 279.6 L478.5 329.7 L478.7 307.0 L478.9 317.0 L479.2 329.7 L479.4 367.8 L479.6 311.9 L479.9 289.3 L480.1 302.8 L480.4 329.2 L480.6 297.4 L480.8 323.5 L481.1 331.6 L481.3 332.3 L481.5 308.7 L481.8 350.4 L482.0 336.3 L482.2 319.2 L482.5 310.3 L482.7 347.1 L482.9 324.0 L483.2 326.6 L483.4 307.9 L483.6 307.4 L483.9 303.9 L484.1 314.6 L484.4 324.1 L484.6 312.4 L484.8 304.1 L485.1 300.1 L485.3 309.8 L485.5 325.8 L485.8 321.8 L486.0 334.5 L486.2 282.9 L486.5 316.4 L486.7 304.1 L486.9 306.6 L487.2 305.3 L487.4 317.6 L487.7 328.0 L487.9 305.9 L488.1 358.4 L488.4 324.3 L488.6 331.7 L488.8 329.9 L489.1 309.7 L489.3 333.6 L489.5 324.2 L489.8 334.7 L490.0 319.2 L490.2 325.8 L490.5 306.8 L490.7 295.8 L490.9 319.9 L491.2 333.4 L491.4 296.5 L491.7 313.1 L491.9 305.8 L492.1 308.8 L492.4 308.2 L492.6 344.5 L492.8 315.6 L493.1 325.5 L493.3 319.5 L493.5 322.8 L493.8 291.2 L494.0 321.7 L494.2 314.2 L494.5 348.7 L494.7 306.8 L495.0 342.3 L495.2 313.4 L495.4 321.4 L495.7 295.8 L495.9 306.4 L496.1 296.5 L496.4 298.4 L496.6 340.9 L496.8 304.6 L497.1 302.1 L497.3 305.8 L497.5 324.0 L497.8 343.4 L498.0 313.7 L498.2 307.6 L498.5 301.7 L498.7 340.9 L499.0 322.0 L499.2 319.2 L499.4 324.1 L499.7 344.0 L499.9 343.4 L500.1 351.8 L500.4 337.7 L500.6 339.8 L500.8 318.9 L501.1 305.1 L501.3 272.2 L501.5 326.2 L501.8 300.5 L502.0 304.2 L502.3 327.2 L502.5 338.2 L502.7 329.9 L503.0 308.8 L503.2 310.8 L503.4 323.0 L503.7 295.2 L503.9 304.1 L504.1 302.4 L504.4 317.6 L504.6 340.3 L504.8 327.4 L505.1 320.0 L505.3 294.9 L505.6 334.6 L505.8 342.4 L506.0 353.7 L506.3 312.1 L506.5 351.2 L506.7 307.6 L507.0 338.6 L507.2 302.6 L507.4 324.6 L507.7 296.0 L507.9 319.1 L508.1 324.5 L508.4 318.0 L508.6 325.3 L508.8 316.7 L509.1 327.2 L509.3 318.1 L509.6 304.3 L509.8 320.7 L510.0 295.9 L510.3 335.5 L510.5 293.4 L510.7 338.2 L511.0 298.9 L511.2 326.6 L511.4 300.0 L511.7 331.1 L511.9 326.4 L512.1 313.7 L512.4 339.8 L512.6 340.1 L512.9 326.5 L513.1 317.1 L513.3 304.3 L513.6 300.6 L513.8 335.5 L514.0 366.2 L514.3 306.0 L514.5 294.1 L514.7 327.4 L515.0 306.8 L515.2 307.5 L515.4 334.3 L515.7 305.6 L515.9 324.0 L516.1 300.9 L516.4 312.8 L516.6 323.9 L516.9 301.3 L517.1 308.2 L517.3 303.0 L517.6 317.4 L517.8 318.9 L518.0 289.9 L518.3 362.4 L518.5 300.1 L518.7 301.7 L519.0 335.7 L519.2 326.7 L519.4 312.2 L519.7 291.7 L519.9 327.7 L520.2 323.4 L520.4 329.9 L520.6 317.0 L520.9 285.1 L521.1 303.4 L521.3 344.1 L521.6 327.1 L521.8 293.7 L522.0 304.8 L522.3 348.7 L522.5 320.3 L522.7 324.5 L523.0 306.0 L523.2 314.5 L523.4 314.5 L523.7 332.2 L523.9 300.9 L524.2 313.2 L524.4 309.9 L524.6 304.1 L524.9 323.9 L525.1 336.3 L525.3 336.6 L525.6 323.8 L525.8 283.5 L526.0 327.1 L526.3 326.7 L526.5 264.4 L526.7 321.9 L527.0 327.1 L527.2 311.5 L527.5 318.6 L527.7 346.8 L527.9 306.7 L528.2 345.4 L528.4 318.7 L528.6 342.9 L528.9 323.7 L529.1 343.5 L529.3 322.0 L529.6 326.5 L529.8 308.5 L530.0 310.6 L530.3 344.6 L530.5 312.5 L530.8 341.0 L531.0 313.1 L531.2 338.2 L531.5 331.1 L531.7 339.0 L531.9 322.5 L532.2 316.3 L532.4 295.3 L532.6 342.3 L532.9 326.3 L533.1 302.9 L533.3 288.9 L533.6 293.5 L533.8 303.1 L534.0 310.7 L534.3 285.8 L534.5 313.6 L534.8 327.5 L535.0 343.7 L535.2 339.5 L535.5 329.8 L535.7 313.0 L535.9 322.7 L536.2 320.0 L536.4 310.8 L536.6 324.9 L536.9 317.9 L537.1 332.5 L537.3 334.8 L537.6 324.5 L537.8 347.0 L538.1 314.7 L538.3 317.1 L538.5 336.3 L538.8 312.1 L539.0 322.3 L539.2 332.4 L539.5 299.7 L539.7 326.3 L539.9 341.8 L540.2 317.2 L540.4 295.5 L540.6 332.3 L540.9 310.7 L541.1 325.2 L541.3 316.2 L541.6 316.7 L541.8 338.8 L542.1 333.4 L542.3 311.2 L542.5 297.3 L542.8 313.2 L543.0 297.1 L543.2 285.2 L543.5 322.7 L543.7 320.0 L543.9 313.1 L544.2 318.2 L544.4 298.1 L544.6 327.9 L544.9 303.5 L545.1 352.3 L545.4 322.3 L545.6 328.5 L545.8 305.3 L546.1 327.4 L546.3 299.6 L546.5 308.0 L546.8 301.9 L547.0 346.1" fill="none" stroke="#5f89fa" stroke-width="1.3" stroke-opacity="0.94" stroke-linejoin="round"/><path d="M605.0 322.6 L605.2 334.5 L605.5 290.2 L605.7 319.3 L605.9 275.7 L606.2 335.5 L606.4 331.4 L606.6 297.0 L606.9 308.7 L607.1 291.7 L607.4 303.5 L607.6 277.0 L607.8 323.3 L608.1 325.1 L608.3 316.9 L608.5 306.3 L608.8 328.5 L609.0 299.1 L609.2 339.9 L609.5 294.2 L609.7 324.4 L609.9 313.6 L610.2 326.3 L610.4 302.7 L610.7 316.9 L610.9 295.1 L611.1 324.9 L611.4 330.8 L611.6 287.9 L611.8 336.9 L612.1 325.9 L612.3 308.9 L612.5 332.7 L612.8 297.3 L613.0 295.3 L613.2 318.3 L613.5 323.2 L613.7 313.8 L613.9 292.0 L614.2 319.8 L614.4 288.3 L614.7 276.8 L614.9 318.1 L615.1 318.7 L615.4 319.4 L615.6 290.4 L615.8 295.3 L616.1 298.5 L616.3 320.0 L616.5 325.9 L616.8 321.6 L617.0 319.4 L617.2 355.5 L617.5 317.8 L617.7 329.6 L618.0 284.8 L618.2 332.0 L618.4 337.8 L618.7 325.7 L618.9 291.8 L619.1 304.8 L619.4 314.7 L619.6 274.2 L619.8 332.0 L620.1 333.9 L620.3 303.1 L620.5 303.9 L620.8 324.5 L621.0 296.3 L621.2 320.8 L621.5 322.0 L621.7 332.1 L622.0 315.2 L622.2 323.4 L622.4 298.7 L622.7 327.1 L622.9 304.7 L623.1 308.7 L623.4 285.2 L623.6 321.1 L623.8 309.2 L624.1 310.7 L624.3 341.7 L624.5 331.2 L624.8 320.8 L625.0 313.8 L625.3 309.9 L625.5 283.6 L625.7 361.3 L626.0 296.4 L626.2 301.7 L626.4 300.5 L626.7 279.8 L626.9 293.0 L627.1 298.8 L627.4 322.7 L627.6 307.0 L627.8 321.4 L628.1 311.3 L628.3 306.0 L628.6 321.7 L628.8 332.6 L629.0 332.2 L629.3 323.5 L629.5 311.0 L629.7 332.3 L630.0 324.7 L630.2 305.8 L630.4 334.6 L630.7 323.9 L630.9 344.8 L631.1 284.1 L631.4 319.8 L631.6 283.6 L631.8 293.5 L632.1 323.2 L632.3 292.0 L632.6 318.4 L632.8 329.3 L633.0 313.9 L633.3 311.2 L633.5 319.1 L633.7 340.1 L634.0 289.1 L634.2 336.7 L634.4 337.6 L634.7 325.0 L634.9 323.7 L635.1 320.1 L635.4 318.1 L635.6 321.4 L635.9 307.6 L636.1 333.6 L636.3 293.1 L636.6 324.3 L636.8 328.5 L637.0 316.0 L637.3 313.7 L637.5 321.0 L637.7 300.3 L638.0 273.3 L638.2 324.0 L638.4 323.4 L638.7 349.3 L638.9 275.7 L639.1 334.0 L639.4 333.7 L639.6 341.9 L639.9 300.2 L640.1 326.6 L640.3 301.8 L640.6 324.9 L640.8 318.2 L641.0 285.6 L641.3 327.2 L641.5 326.1 L641.7 318.6 L642.0 296.6 L642.2 322.4 L642.4 354.6 L642.7 293.2 L642.9 301.1 L643.2 310.3 L643.4 279.7 L643.6 343.4 L643.9 344.3 L644.1 319.2 L644.3 344.3 L644.6 318.9 L644.8 317.3 L645.0 313.9 L645.3 330.7 L645.5 306.4 L645.7 305.7 L646.0 301.8 L646.2 289.7 L646.4 306.5 L646.7 320.9 L646.9 310.5 L647.2 305.0 L647.4 305.2 L647.6 329.6 L647.9 340.4 L648.1 329.5 L648.3 313.9 L648.6 308.7 L648.8 318.7 L649.0 303.3 L649.3 325.3 L649.5 351.9 L649.7 325.6 L650.0 331.4 L650.2 354.7 L650.5 325.1 L650.7 343.8 L650.9 277.2 L651.2 301.1 L651.4 334.0 L651.6 314.9 L651.9 326.6 L652.1 301.8 L652.3 325.5 L652.6 321.6 L652.8 335.9 L653.0 306.6 L653.3 302.4 L653.5 289.7 L653.8 322.2 L654.0 316.1 L654.2 325.9 L654.5 323.4 L654.7 292.6 L654.9 308.9 L655.2 321.4 L655.4 330.3 L655.6 287.0 L655.9 336.7 L656.1 296.4 L656.3 285.6 L656.6 296.3 L656.8 301.9 L657.0 328.5 L657.3 304.4 L657.5 330.3 L657.8 309.9 L658.0 337.7 L658.2 299.5 L658.5 331.1 L658.7 299.2 L658.9 315.4 L659.2 306.9 L659.4 300.0 L659.6 289.2 L659.9 315.5 L660.1 316.2 L660.3 338.1 L660.6 303.4 L660.8 294.1 L661.1 306.7 L661.3 309.7 L661.5 283.1 L661.8 327.5 L662.0 306.4 L662.2 312.3 L662.5 332.7 L662.7 333.0 L662.9 321.7 L663.2 325.7 L663.4 322.2 L663.6 330.2 L663.9 343.9 L664.1 344.1 L664.3 319.5 L664.6 310.6 L664.8 330.6 L665.1 367.8 L665.3 319.6 L665.5 332.5 L665.8 322.9 L666.0 330.3 L666.2 306.0 L666.5 270.3 L666.7 304.2 L666.9 305.8 L667.2 279.5 L667.4 303.7 L667.6 292.5 L667.9 351.7 L668.1 319.2 L668.4 306.9 L668.6 313.6 L668.8 325.8 L669.1 314.6 L669.3 278.8 L669.5 335.3 L669.8 317.7 L670.0 316.3 L670.2 289.8 L670.5 311.9 L670.7 330.7 L670.9 358.4 L671.2 315.4 L671.4 366.2 L671.6 307.5 L671.9 314.4 L672.1 308.9 L672.4 312.8 L672.6 321.8 L672.8 319.2 L673.1 331.6 L673.3 317.1 L673.5 340.5 L673.8 289.3 L674.0 311.2 L674.2 311.6 L674.5 307.2 L674.7 323.9 L674.9 312.5 L675.2 290.8 L675.4 305.3 L675.7 299.5 L675.9 288.5 L676.1 287.5 L676.4 313.3 L676.6 313.6 L676.8 329.2 L677.1 311.2 L677.3 315.0 L677.5 310.4 L677.8 259.5 L678.0 304.9 L678.2 340.6 L678.5 354.9 L678.7 315.1 L678.9 326.4 L679.2 343.8 L679.4 312.9 L679.7 319.5 L679.9 339.2 L680.1 341.9 L680.4 304.7 L680.6 307.5 L680.8 319.0 L681.1 337.4 L681.3 336.2 L681.5 321.1 L681.8 336.5 L682.0 319.6 L682.2 293.4 L682.5 331.6 L682.7 317.0 L683.0 307.9 L683.2 298.1 L683.4 358.1 L683.7 313.7 L683.9 327.4 L684.1 306.4 L684.4 297.1 L684.6 331.2 L684.8 316.5 L685.1 311.5 L685.3 317.6 L685.5 319.3 L685.8 327.8 L686.0 314.9 L686.2 315.9 L686.5 311.7 L686.7 295.3 L687.0 297.3 L687.2 323.7 L687.4 303.1 L687.7 316.8 L687.9 293.2 L688.1 327.0 L688.4 321.2 L688.6 347.4 L688.8 316.8 L689.1 289.7 L689.3 333.5 L689.5 300.5 L689.8 320.2 L690.0 313.1 L690.3 304.0 L690.5 319.3 L690.7 327.1 L691.0 302.8 L691.2 329.3 L691.4 302.7 L691.7 273.0 L691.9 341.9 L692.1 300.0 L692.4 282.5 L692.6 325.0 L692.8 316.0 L693.1 284.7 L693.3 313.8 L693.6 285.2 L693.8 317.0 L694.0 304.8 L694.3 318.8 L694.5 309.1 L694.7 319.5 L695.0 306.7 L695.2 313.7 L695.4 328.4 L695.7 345.0 L695.9 318.9 L696.1 319.5 L696.4 319.3 L696.6 313.8 L696.8 308.8 L697.1 317.0 L697.3 298.4 L697.6 338.8 L697.8 337.0 L698.0 321.4 L698.3 314.8 L698.5 289.9 L698.7 301.1 L699.0 339.1 L699.2 309.6 L699.4 317.2 L699.7 317.8 L699.9 312.4 L700.1 321.3 L700.4 337.2 L700.6 316.7 L700.9 326.8 L701.1 332.3 L701.3 332.5 L701.6 297.3 L701.8 281.8 L702.0 289.7 L702.3 295.1 L702.5 332.6 L702.7 261.7 L703.0 306.1 L703.2 297.2 L703.4 325.8 L703.7 312.7 L703.9 341.9 L704.1 284.8 L704.4 310.1 L704.6 301.0 L704.9 335.3 L705.1 314.1 L705.3 320.1 L705.6 315.4 L705.8 311.8 L706.0 330.6 L706.3 305.1 L706.5 321.0 L706.7 332.2 L707.0 306.7 L707.2 298.9 L707.4 290.1 L707.7 310.2 L707.9 296.0 L708.2 305.1 L708.4 300.5 L708.6 334.1 L708.9 320.6 L709.1 303.9 L709.3 327.1 L709.6 329.0 L709.8 327.5 L710.0 312.3 L710.3 310.9 L710.5 318.0 L710.7 298.6 L711.0 352.2 L711.2 305.7 L711.4 342.2 L711.7 300.0 L711.9 307.9 L712.2 325.7 L712.4 332.1 L712.6 300.1 L712.9 344.0 L713.1 284.1 L713.3 309.8 L713.6 331.4 L713.8 289.1 L714.0 281.2 L714.3 305.1 L714.5 326.2 L714.7 270.3 L715.0 301.0 L715.2 301.8 L715.5 299.7 L715.7 315.1 L715.9 347.3 L716.2 322.1 L716.4 306.5 L716.6 317.7 L716.9 316.5 L717.1 297.0 L717.3 283.9 L717.6 313.8 L717.8 316.2 L718.0 338.4 L718.3 304.9 L718.5 312.9 L718.8 323.8 L719.0 345.1 L719.2 318.8 L719.5 287.8 L719.7 303.4 L719.9 285.9 L720.2 314.5 L720.4 295.6 L720.6 326.2 L720.9 296.8 L721.1 298.1 L721.3 333.7 L721.6 296.4 L721.8 295.0 L722.0 337.6 L722.3 344.7 L722.5 306.3 L722.8 310.4 L723.0 341.9 L723.2 276.0 L723.5 324.6 L723.7 298.1 L723.9 311.4 L724.2 321.4 L724.4 324.6 L724.6 314.6 L724.9 315.5 L725.1 300.0 L725.3 346.0 L725.6 296.7 L725.8 283.4 L726.1 323.2 L726.3 332.5 L726.5 315.0 L726.8 318.9 L727.0 322.6 L727.2 319.6 L727.5 288.8 L727.7 317.2 L727.9 359.1 L728.2 312.1 L728.4 302.7 L728.6 316.7 L728.9 317.3 L729.1 262.7 L729.3 310.5 L729.6 354.3 L729.8 287.6 L730.1 346.2 L730.3 306.7 L730.5 315.4 L730.8 325.1 L731.0 302.0 L731.2 329.6 L731.5 319.4 L731.7 302.0 L731.9 338.9 L732.2 314.4 L732.4 295.3 L732.6 307.2 L732.9 327.5 L733.1 291.3 L733.4 310.0 L733.6 294.1 L733.8 333.2 L734.1 283.5 L734.3 298.6 L734.5 330.3 L734.8 337.8 L735.0 291.9 L735.2 311.1 L735.5 325.2 L735.7 300.1 L735.9 291.9 L736.2 298.7 L736.4 314.3 L736.6 329.6 L736.9 337.7 L737.1 301.8 L737.4 284.6 L737.6 301.6 L737.8 282.2 L738.1 328.9 L738.3 322.6 L738.5 358.1 L738.8 305.5 L739.0 335.1 L739.2 308.8 L739.5 348.7 L739.7 290.4 L739.9 321.8 L740.2 315.8 L740.4 336.8 L740.7 320.4 L740.9 311.1 L741.1 293.4 L741.4 346.7 L741.6 324.5 L741.8 333.1 L742.1 356.6 L742.3 313.3 L742.5 313.8 L742.8 320.5 L743.0 302.0 L743.2 335.2 L743.5 339.6 L743.7 328.0 L743.9 300.4 L744.2 263.3 L744.4 314.0 L744.7 297.8 L744.9 306.5 L745.1 313.3 L745.4 311.2 L745.6 300.5 L745.8 337.7 L746.1 300.9 L746.3 309.1 L746.5 323.5 L746.8 290.8 L747.0 304.7 L747.2 337.1 L747.5 293.8 L747.7 322.7 L748.0 331.7 L748.2 315.1 L748.4 317.9 L748.7 335.7 L748.9 338.6 L749.1 344.8 L749.4 316.1 L749.6 307.4 L749.8 313.1 L750.1 321.6 L750.3 308.7 L750.5 327.3 L750.8 311.4 L751.0 319.3 L751.2 305.2 L751.5 307.8 L751.7 333.3 L752.0 296.0 L752.2 320.5 L752.4 317.3 L752.7 325.3 L752.9 331.3 L753.1 328.2 L753.4 322.6 L753.6 308.2 L753.8 280.3 L754.1 323.5 L754.3 303.7 L754.5 322.4 L754.8 336.3 L755.0 326.6 L755.3 285.7 L755.5 320.6 L755.7 300.0 L756.0 317.6 L756.2 327.5 L756.4 310.7 L756.7 310.9 L756.9 315.9 L757.1 302.4 L757.4 316.4 L757.6 329.2 L757.8 304.1 L758.1 315.8 L758.3 331.8 L758.6 313.8 L758.8 355.1 L759.0 317.0 L759.3 318.9 L759.5 328.2 L759.7 295.0 L760.0 338.2 L760.2 336.6 L760.4 311.3 L760.7 309.9 L760.9 315.7 L761.1 363.5 L761.4 321.4 L761.6 291.7 L761.8 327.2 L762.1 345.9 L762.3 308.8 L762.6 267.1 L762.8 348.2 L763.0 301.7 L763.3 289.1 L763.5 278.9 L763.7 326.3 L764.0 293.9 L764.2 320.6 L764.4 308.2 L764.7 318.5 L764.9 328.2 L765.1 324.6 L765.4 280.7 L765.6 290.0 L765.9 283.9 L766.1 329.4 L766.3 320.0 L766.6 277.1 L766.8 308.1 L767.0 332.9 L767.3 303.0 L767.5 289.4 L767.7 299.2 L768.0 352.8 L768.2 317.6 L768.4 354.9 L768.7 281.7 L768.9 323.6 L769.1 325.8 L769.4 313.1 L769.6 313.9 L769.9 295.8 L770.1 326.1 L770.3 313.4 L770.6 306.6 L770.8 305.7 L771.0 342.4 L771.3 304.6 L771.5 317.3 L771.7 317.7 L772.0 340.2 L772.2 308.9 L772.4 355.3 L772.7 333.8 L772.9 299.1 L773.2 315.4 L773.4 321.6 L773.6 296.0 L773.9 300.8 L774.1 317.4 L774.3 354.2 L774.6 317.2 L774.8 351.8 L775.0 321.6 L775.3 298.4 L775.5 313.6 L775.7 325.3 L776.0 366.2 L776.2 331.7 L776.4 309.4 L776.7 343.8 L776.9 318.6 L777.2 304.6 L777.4 332.6 L777.6 306.9 L777.9 309.3 L778.1 311.1 L778.3 317.6 L778.6 321.5 L778.8 305.1 L779.0 291.6 L779.3 314.6 L779.5 350.3 L779.7 325.1 L780.0 357.0 L780.2 305.3 L780.5 310.3 L780.7 311.2 L780.9 302.7 L781.2 323.3 L781.4 298.5 L781.6 307.3 L781.9 325.0 L782.1 317.7 L782.3 320.6 L782.6 333.2 L782.8 341.0 L783.0 305.3 L783.3 315.1 L783.5 322.0 L783.8 316.8 L784.0 305.3 L784.2 342.5 L784.5 343.2 L784.7 344.8 L784.9 343.9 L785.2 311.5 L785.4 284.8 L785.6 320.3 L785.9 325.8 L786.1 313.1 L786.3 284.2 L786.6 347.3 L786.8 314.8 L787.0 311.7 L787.3 317.0 L787.5 302.2 L787.8 301.7 L788.0 283.3 L788.2 363.0 L788.5 315.3 L788.7 282.8 L788.9 348.0 L789.2 310.0 L789.4 314.6 L789.6 308.5 L789.9 320.8 L790.1 338.1 L790.3 322.5 L790.6 296.4 L790.8 287.1 L791.1 341.4 L791.3 285.5 L791.5 325.2 L791.8 282.7 L792.0 328.0 L792.2 328.0 L792.5 318.0 L792.7 302.1 L792.9 334.5 L793.2 309.4 L793.4 348.0 L793.6 317.1 L793.9 335.3 L794.1 322.6 L794.3 291.1 L794.6 302.6 L794.8 313.7 L795.1 319.8 L795.3 338.6 L795.5 301.6 L795.8 322.4 L796.0 312.6 L796.2 285.5 L796.5 322.6 L796.7 312.4 L796.9 321.6 L797.2 317.8 L797.4 321.6 L797.6 301.5 L797.9 367.8 L798.1 310.9 L798.4 316.3 L798.6 318.1 L798.8 320.9 L799.1 334.4 L799.3 325.8 L799.5 302.3 L799.8 275.7 L800.0 331.2 L800.2 313.4 L800.5 313.2 L800.7 339.3 L800.9 305.8 L801.2 327.1 L801.4 311.5 L801.6 303.4 L801.9 292.5 L802.1 311.5 L802.4 327.4 L802.6 306.3 L802.8 317.3 L803.1 286.2 L803.3 319.3 L803.5 313.8 L803.8 318.6 L804.0 335.7 L804.2 279.9 L804.5 304.4 L804.7 289.9 L804.9 300.8 L805.2 319.5 L805.4 314.0 L805.7 327.9 L805.9 305.0 L806.1 363.0 L806.4 322.8 L806.6 322.8 L806.8 318.4 L807.1 299.7 L807.3 315.3 L807.5 335.8 L807.8 318.5 L808.0 312.1 L808.2 313.6 L808.5 319.9 L808.7 296.1 L808.9 318.0 L809.2 318.2 L809.4 309.8 L809.7 300.5 L809.9 292.8 L810.1 288.5 L810.4 318.0 L810.6 318.4 L810.8 318.7 L811.1 308.0 L811.3 314.0 L811.5 311.7 L811.8 272.9 L812.0 338.5 L812.2 315.9 L812.5 342.3 L812.7 302.5 L813.0 349.9 L813.2 308.5 L813.4 316.2 L813.7 295.6 L813.9 306.4 L814.1 303.5 L814.4 293.3 L814.6 333.5 L814.8 301.7 L815.1 290.0 L815.3 308.9 L815.5 302.1 L815.8 338.5 L816.0 291.1 L816.2 320.0 L816.5 306.0 L816.7 328.5 L817.0 301.2 L817.2 314.1 L817.4 322.6 L817.7 338.3 L817.9 331.4 L818.1 341.1 L818.4 341.5 L818.6 351.6 L818.8 304.6 L819.1 313.9 L819.3 281.4 L819.5 328.0 L819.8 288.3 L820.0 302.7 L820.3 324.5 L820.5 318.6 L820.7 323.7 L821.0 331.8 L821.2 319.5 L821.4 317.2 L821.7 283.0 L821.9 314.4 L822.1 313.9 L822.4 334.2 L822.6 331.4 L822.8 330.5 L823.1 332.0 L823.3 297.8 L823.6 337.9 L823.8 326.9 L824.0 351.0 L824.3 308.4 L824.5 333.0 L824.7 312.0 L825.0 313.1 L825.2 302.0 L825.4 320.4 L825.7 289.3 L825.9 319.4 L826.1 318.5 L826.4 304.3 L826.6 328.5 L826.8 299.0 L827.1 321.1 L827.3 309.7 L827.6 307.5 L827.8 318.8 L828.0 292.5 L828.3 330.1 L828.5 298.5 L828.7 340.9 L829.0 290.4 L829.2 336.0 L829.4 301.8 L829.7 338.0 L829.9 315.5 L830.1 299.1 L830.4 325.2 L830.6 325.0 L830.9 327.2 L831.1 297.7 L831.3 292.8 L831.6 290.7 L831.8 332.9 L832.0 359.6 L832.3 319.2 L832.5 294.2 L832.7 313.0 L833.0 306.5 L833.2 306.9 L833.4 327.1 L833.7 295.4 L833.9 307.1 L834.1 310.8 L834.4 314.5 L834.6 322.5 L834.9 306.4 L835.1 297.9 L835.3 313.6 L835.6 310.7 L835.8 320.3 L836.0 303.9 L836.3 316.2 L836.5 311.7 L836.7 304.6 L837.0 331.4 L837.2 297.4 L837.4 315.2 L837.7 299.6 L837.9 313.0 L838.2 321.0 L838.4 330.8 L838.6 315.5 L838.9 278.2 L839.1 286.2 L839.3 333.4 L839.6 327.2 L839.8 289.1 L840.0 318.3 L840.3 338.2 L840.5 339.4 L840.7 318.5 L841.0 312.0 L841.2 322.0 L841.4 313.0 L841.7 330.4 L841.9 285.8 L842.2 324.3 L842.4 311.9 L842.6 312.5 L842.9 329.1 L843.1 318.5 L843.3 330.8 L843.6 308.8 L843.8 295.3 L844.0 324.8 L844.3 320.9 L844.5 327.4 L844.7 302.9 L845.0 308.3 L845.2 304.6 L845.5 325.5 L845.7 334.4 L845.9 295.0 L846.2 334.7 L846.4 304.4 L846.6 345.1 L846.9 308.9 L847.1 321.9 L847.3 303.7 L847.6 317.6 L847.8 302.0 L848.0 318.2 L848.3 346.6 L848.5 308.7 L848.8 328.0 L849.0 297.1 L849.2 325.7 L849.5 340.1 L849.7 336.2 L849.9 325.7 L850.2 310.8 L850.4 293.4 L850.6 320.3 L850.9 321.7 L851.1 301.1 L851.3 281.2 L851.6 285.6 L851.8 261.7 L852.0 299.6 L852.3 283.0 L852.5 302.5 L852.8 327.3 L853.0 348.9 L853.2 337.1 L853.5 306.1 L853.7 308.7 L853.9 316.0 L854.2 318.2 L854.4 311.3 L854.6 323.6 L854.9 315.8 L855.1 332.2 L855.3 318.6 L855.6 332.8 L855.8 343.9 L856.1 316.6 L856.3 342.1 L856.5 333.4 L856.8 318.8 L857.0 325.2 L857.2 329.9 L857.5 286.6 L857.7 321.2 L857.9 329.6 L858.2 333.0 L858.4 300.1 L858.6 328.8 L858.9 272.0 L859.1 328.2 L859.3 322.9 L859.6 318.3 L859.8 319.8 L860.1 331.2 L860.3 326.6 L860.5 304.2 L860.8 308.1 L861.0 301.6 L861.2 285.9 L861.5 345.4 L861.7 321.5 L861.9 315.5 L862.2 314.0 L862.4 300.9 L862.6 352.0 L862.9 299.0 L863.1 348.3 L863.4 329.1 L863.6 329.3 L863.8 296.7 L864.1 316.8 L864.3 300.4 L864.5 298.0 L864.8 282.5 L865.0 348.6 L865.0 367.8 L605.0 367.8 Z" fill="#5580f8" fill-opacity="0.28" stroke="none"/><path d="M605.0 322.6 L605.2 334.5 L605.5 290.2 L605.7 319.3 L605.9 275.7 L606.2 335.5 L606.4 331.4 L606.6 297.0 L606.9 308.7 L607.1 291.7 L607.4 303.5 L607.6 277.0 L607.8 323.3 L608.1 325.1 L608.3 316.9 L608.5 306.3 L608.8 328.5 L609.0 299.1 L609.2 339.9 L609.5 294.2 L609.7 324.4 L609.9 313.6 L610.2 326.3 L610.4 302.7 L610.7 316.9 L610.9 295.1 L611.1 324.9 L611.4 330.8 L611.6 287.9 L611.8 336.9 L612.1 325.9 L612.3 308.9 L612.5 332.7 L612.8 297.3 L613.0 295.3 L613.2 318.3 L613.5 323.2 L613.7 313.8 L613.9 292.0 L614.2 319.8 L614.4 288.3 L614.7 276.8 L614.9 318.1 L615.1 318.7 L615.4 319.4 L615.6 290.4 L615.8 295.3 L616.1 298.5 L616.3 320.0 L616.5 325.9 L616.8 321.6 L617.0 319.4 L617.2 355.5 L617.5 317.8 L617.7 329.6 L618.0 284.8 L618.2 332.0 L618.4 337.8 L618.7 325.7 L618.9 291.8 L619.1 304.8 L619.4 314.7 L619.6 274.2 L619.8 332.0 L620.1 333.9 L620.3 303.1 L620.5 303.9 L620.8 324.5 L621.0 296.3 L621.2 320.8 L621.5 322.0 L621.7 332.1 L622.0 315.2 L622.2 323.4 L622.4 298.7 L622.7 327.1 L622.9 304.7 L623.1 308.7 L623.4 285.2 L623.6 321.1 L623.8 309.2 L624.1 310.7 L624.3 341.7 L624.5 331.2 L624.8 320.8 L625.0 313.8 L625.3 309.9 L625.5 283.6 L625.7 361.3 L626.0 296.4 L626.2 301.7 L626.4 300.5 L626.7 279.8 L626.9 293.0 L627.1 298.8 L627.4 322.7 L627.6 307.0 L627.8 321.4 L628.1 311.3 L628.3 306.0 L628.6 321.7 L628.8 332.6 L629.0 332.2 L629.3 323.5 L629.5 311.0 L629.7 332.3 L630.0 324.7 L630.2 305.8 L630.4 334.6 L630.7 323.9 L630.9 344.8 L631.1 284.1 L631.4 319.8 L631.6 283.6 L631.8 293.5 L632.1 323.2 L632.3 292.0 L632.6 318.4 L632.8 329.3 L633.0 313.9 L633.3 311.2 L633.5 319.1 L633.7 340.1 L634.0 289.1 L634.2 336.7 L634.4 337.6 L634.7 325.0 L634.9 323.7 L635.1 320.1 L635.4 318.1 L635.6 321.4 L635.9 307.6 L636.1 333.6 L636.3 293.1 L636.6 324.3 L636.8 328.5 L637.0 316.0 L637.3 313.7 L637.5 321.0 L637.7 300.3 L638.0 273.3 L638.2 324.0 L638.4 323.4 L638.7 349.3 L638.9 275.7 L639.1 334.0 L639.4 333.7 L639.6 341.9 L639.9 300.2 L640.1 326.6 L640.3 301.8 L640.6 324.9 L640.8 318.2 L641.0 285.6 L641.3 327.2 L641.5 326.1 L641.7 318.6 L642.0 296.6 L642.2 322.4 L642.4 354.6 L642.7 293.2 L642.9 301.1 L643.2 310.3 L643.4 279.7 L643.6 343.4 L643.9 344.3 L644.1 319.2 L644.3 344.3 L644.6 318.9 L644.8 317.3 L645.0 313.9 L645.3 330.7 L645.5 306.4 L645.7 305.7 L646.0 301.8 L646.2 289.7 L646.4 306.5 L646.7 320.9 L646.9 310.5 L647.2 305.0 L647.4 305.2 L647.6 329.6 L647.9 340.4 L648.1 329.5 L648.3 313.9 L648.6 308.7 L648.8 318.7 L649.0 303.3 L649.3 325.3 L649.5 351.9 L649.7 325.6 L650.0 331.4 L650.2 354.7 L650.5 325.1 L650.7 343.8 L650.9 277.2 L651.2 301.1 L651.4 334.0 L651.6 314.9 L651.9 326.6 L652.1 301.8 L652.3 325.5 L652.6 321.6 L652.8 335.9 L653.0 306.6 L653.3 302.4 L653.5 289.7 L653.8 322.2 L654.0 316.1 L654.2 325.9 L654.5 323.4 L654.7 292.6 L654.9 308.9 L655.2 321.4 L655.4 330.3 L655.6 287.0 L655.9 336.7 L656.1 296.4 L656.3 285.6 L656.6 296.3 L656.8 301.9 L657.0 328.5 L657.3 304.4 L657.5 330.3 L657.8 309.9 L658.0 337.7 L658.2 299.5 L658.5 331.1 L658.7 299.2 L658.9 315.4 L659.2 306.9 L659.4 300.0 L659.6 289.2 L659.9 315.5 L660.1 316.2 L660.3 338.1 L660.6 303.4 L660.8 294.1 L661.1 306.7 L661.3 309.7 L661.5 283.1 L661.8 327.5 L662.0 306.4 L662.2 312.3 L662.5 332.7 L662.7 333.0 L662.9 321.7 L663.2 325.7 L663.4 322.2 L663.6 330.2 L663.9 343.9 L664.1 344.1 L664.3 319.5 L664.6 310.6 L664.8 330.6 L665.1 367.8 L665.3 319.6 L665.5 332.5 L665.8 322.9 L666.0 330.3 L666.2 306.0 L666.5 270.3 L666.7 304.2 L666.9 305.8 L667.2 279.5 L667.4 303.7 L667.6 292.5 L667.9 351.7 L668.1 319.2 L668.4 306.9 L668.6 313.6 L668.8 325.8 L669.1 314.6 L669.3 278.8 L669.5 335.3 L669.8 317.7 L670.0 316.3 L670.2 289.8 L670.5 311.9 L670.7 330.7 L670.9 358.4 L671.2 315.4 L671.4 366.2 L671.6 307.5 L671.9 314.4 L672.1 308.9 L672.4 312.8 L672.6 321.8 L672.8 319.2 L673.1 331.6 L673.3 317.1 L673.5 340.5 L673.8 289.3 L674.0 311.2 L674.2 311.6 L674.5 307.2 L674.7 323.9 L674.9 312.5 L675.2 290.8 L675.4 305.3 L675.7 299.5 L675.9 288.5 L676.1 287.5 L676.4 313.3 L676.6 313.6 L676.8 329.2 L677.1 311.2 L677.3 315.0 L677.5 310.4 L677.8 259.5 L678.0 304.9 L678.2 340.6 L678.5 354.9 L678.7 315.1 L678.9 326.4 L679.2 343.8 L679.4 312.9 L679.7 319.5 L679.9 339.2 L680.1 341.9 L680.4 304.7 L680.6 307.5 L680.8 319.0 L681.1 337.4 L681.3 336.2 L681.5 321.1 L681.8 336.5 L682.0 319.6 L682.2 293.4 L682.5 331.6 L682.7 317.0 L683.0 307.9 L683.2 298.1 L683.4 358.1 L683.7 313.7 L683.9 327.4 L684.1 306.4 L684.4 297.1 L684.6 331.2 L684.8 316.5 L685.1 311.5 L685.3 317.6 L685.5 319.3 L685.8 327.8 L686.0 314.9 L686.2 315.9 L686.5 311.7 L686.7 295.3 L687.0 297.3 L687.2 323.7 L687.4 303.1 L687.7 316.8 L687.9 293.2 L688.1 327.0 L688.4 321.2 L688.6 347.4 L688.8 316.8 L689.1 289.7 L689.3 333.5 L689.5 300.5 L689.8 320.2 L690.0 313.1 L690.3 304.0 L690.5 319.3 L690.7 327.1 L691.0 302.8 L691.2 329.3 L691.4 302.7 L691.7 273.0 L691.9 341.9 L692.1 300.0 L692.4 282.5 L692.6 325.0 L692.8 316.0 L693.1 284.7 L693.3 313.8 L693.6 285.2 L693.8 317.0 L694.0 304.8 L694.3 318.8 L694.5 309.1 L694.7 319.5 L695.0 306.7 L695.2 313.7 L695.4 328.4 L695.7 345.0 L695.9 318.9 L696.1 319.5 L696.4 319.3 L696.6 313.8 L696.8 308.8 L697.1 317.0 L697.3 298.4 L697.6 338.8 L697.8 337.0 L698.0 321.4 L698.3 314.8 L698.5 289.9 L698.7 301.1 L699.0 339.1 L699.2 309.6 L699.4 317.2 L699.7 317.8 L699.9 312.4 L700.1 321.3 L700.4 337.2 L700.6 316.7 L700.9 326.8 L701.1 332.3 L701.3 332.5 L701.6 297.3 L701.8 281.8 L702.0 289.7 L702.3 295.1 L702.5 332.6 L702.7 261.7 L703.0 306.1 L703.2 297.2 L703.4 325.8 L703.7 312.7 L703.9 341.9 L704.1 284.8 L704.4 310.1 L704.6 301.0 L704.9 335.3 L705.1 314.1 L705.3 320.1 L705.6 315.4 L705.8 311.8 L706.0 330.6 L706.3 305.1 L706.5 321.0 L706.7 332.2 L707.0 306.7 L707.2 298.9 L707.4 290.1 L707.7 310.2 L707.9 296.0 L708.2 305.1 L708.4 300.5 L708.6 334.1 L708.9 320.6 L709.1 303.9 L709.3 327.1 L709.6 329.0 L709.8 327.5 L710.0 312.3 L710.3 310.9 L710.5 318.0 L710.7 298.6 L711.0 352.2 L711.2 305.7 L711.4 342.2 L711.7 300.0 L711.9 307.9 L712.2 325.7 L712.4 332.1 L712.6 300.1 L712.9 344.0 L713.1 284.1 L713.3 309.8 L713.6 331.4 L713.8 289.1 L714.0 281.2 L714.3 305.1 L714.5 326.2 L714.7 270.3 L715.0 301.0 L715.2 301.8 L715.5 299.7 L715.7 315.1 L715.9 347.3 L716.2 322.1 L716.4 306.5 L716.6 317.7 L716.9 316.5 L717.1 297.0 L717.3 283.9 L717.6 313.8 L717.8 316.2 L718.0 338.4 L718.3 304.9 L718.5 312.9 L718.8 323.8 L719.0 345.1 L719.2 318.8 L719.5 287.8 L719.7 303.4 L719.9 285.9 L720.2 314.5 L720.4 295.6 L720.6 326.2 L720.9 296.8 L721.1 298.1 L721.3 333.7 L721.6 296.4 L721.8 295.0 L722.0 337.6 L722.3 344.7 L722.5 306.3 L722.8 310.4 L723.0 341.9 L723.2 276.0 L723.5 324.6 L723.7 298.1 L723.9 311.4 L724.2 321.4 L724.4 324.6 L724.6 314.6 L724.9 315.5 L725.1 300.0 L725.3 346.0 L725.6 296.7 L725.8 283.4 L726.1 323.2 L726.3 332.5 L726.5 315.0 L726.8 318.9 L727.0 322.6 L727.2 319.6 L727.5 288.8 L727.7 317.2 L727.9 359.1 L728.2 312.1 L728.4 302.7 L728.6 316.7 L728.9 317.3 L729.1 262.7 L729.3 310.5 L729.6 354.3 L729.8 287.6 L730.1 346.2 L730.3 306.7 L730.5 315.4 L730.8 325.1 L731.0 302.0 L731.2 329.6 L731.5 319.4 L731.7 302.0 L731.9 338.9 L732.2 314.4 L732.4 295.3 L732.6 307.2 L732.9 327.5 L733.1 291.3 L733.4 310.0 L733.6 294.1 L733.8 333.2 L734.1 283.5 L734.3 298.6 L734.5 330.3 L734.8 337.8 L735.0 291.9 L735.2 311.1 L735.5 325.2 L735.7 300.1 L735.9 291.9 L736.2 298.7 L736.4 314.3 L736.6 329.6 L736.9 337.7 L737.1 301.8 L737.4 284.6 L737.6 301.6 L737.8 282.2 L738.1 328.9 L738.3 322.6 L738.5 358.1 L738.8 305.5 L739.0 335.1 L739.2 308.8 L739.5 348.7 L739.7 290.4 L739.9 321.8 L740.2 315.8 L740.4 336.8 L740.7 320.4 L740.9 311.1 L741.1 293.4 L741.4 346.7 L741.6 324.5 L741.8 333.1 L742.1 356.6 L742.3 313.3 L742.5 313.8 L742.8 320.5 L743.0 302.0 L743.2 335.2 L743.5 339.6 L743.7 328.0 L743.9 300.4 L744.2 263.3 L744.4 314.0 L744.7 297.8 L744.9 306.5 L745.1 313.3 L745.4 311.2 L745.6 300.5 L745.8 337.7 L746.1 300.9 L746.3 309.1 L746.5 323.5 L746.8 290.8 L747.0 304.7 L747.2 337.1 L747.5 293.8 L747.7 322.7 L748.0 331.7 L748.2 315.1 L748.4 317.9 L748.7 335.7 L748.9 338.6 L749.1 344.8 L749.4 316.1 L749.6 307.4 L749.8 313.1 L750.1 321.6 L750.3 308.7 L750.5 327.3 L750.8 311.4 L751.0 319.3 L751.2 305.2 L751.5 307.8 L751.7 333.3 L752.0 296.0 L752.2 320.5 L752.4 317.3 L752.7 325.3 L752.9 331.3 L753.1 328.2 L753.4 322.6 L753.6 308.2 L753.8 280.3 L754.1 323.5 L754.3 303.7 L754.5 322.4 L754.8 336.3 L755.0 326.6 L755.3 285.7 L755.5 320.6 L755.7 300.0 L756.0 317.6 L756.2 327.5 L756.4 310.7 L756.7 310.9 L756.9 315.9 L757.1 302.4 L757.4 316.4 L757.6 329.2 L757.8 304.1 L758.1 315.8 L758.3 331.8 L758.6 313.8 L758.8 355.1 L759.0 317.0 L759.3 318.9 L759.5 328.2 L759.7 295.0 L760.0 338.2 L760.2 336.6 L760.4 311.3 L760.7 309.9 L760.9 315.7 L761.1 363.5 L761.4 321.4 L761.6 291.7 L761.8 327.2 L762.1 345.9 L762.3 308.8 L762.6 267.1 L762.8 348.2 L763.0 301.7 L763.3 289.1 L763.5 278.9 L763.7 326.3 L764.0 293.9 L764.2 320.6 L764.4 308.2 L764.7 318.5 L764.9 328.2 L765.1 324.6 L765.4 280.7 L765.6 290.0 L765.9 283.9 L766.1 329.4 L766.3 320.0 L766.6 277.1 L766.8 308.1 L767.0 332.9 L767.3 303.0 L767.5 289.4 L767.7 299.2 L768.0 352.8 L768.2 317.6 L768.4 354.9 L768.7 281.7 L768.9 323.6 L769.1 325.8 L769.4 313.1 L769.6 313.9 L769.9 295.8 L770.1 326.1 L770.3 313.4 L770.6 306.6 L770.8 305.7 L771.0 342.4 L771.3 304.6 L771.5 317.3 L771.7 317.7 L772.0 340.2 L772.2 308.9 L772.4 355.3 L772.7 333.8 L772.9 299.1 L773.2 315.4 L773.4 321.6 L773.6 296.0 L773.9 300.8 L774.1 317.4 L774.3 354.2 L774.6 317.2 L774.8 351.8 L775.0 321.6 L775.3 298.4 L775.5 313.6 L775.7 325.3 L776.0 366.2 L776.2 331.7 L776.4 309.4 L776.7 343.8 L776.9 318.6 L777.2 304.6 L777.4 332.6 L777.6 306.9 L777.9 309.3 L778.1 311.1 L778.3 317.6 L778.6 321.5 L778.8 305.1 L779.0 291.6 L779.3 314.6 L779.5 350.3 L779.7 325.1 L780.0 357.0 L780.2 305.3 L780.5 310.3 L780.7 311.2 L780.9 302.7 L781.2 323.3 L781.4 298.5 L781.6 307.3 L781.9 325.0 L782.1 317.7 L782.3 320.6 L782.6 333.2 L782.8 341.0 L783.0 305.3 L783.3 315.1 L783.5 322.0 L783.8 316.8 L784.0 305.3 L784.2 342.5 L784.5 343.2 L784.7 344.8 L784.9 343.9 L785.2 311.5 L785.4 284.8 L785.6 320.3 L785.9 325.8 L786.1 313.1 L786.3 284.2 L786.6 347.3 L786.8 314.8 L787.0 311.7 L787.3 317.0 L787.5 302.2 L787.8 301.7 L788.0 283.3 L788.2 363.0 L788.5 315.3 L788.7 282.8 L788.9 348.0 L789.2 310.0 L789.4 314.6 L789.6 308.5 L789.9 320.8 L790.1 338.1 L790.3 322.5 L790.6 296.4 L790.8 287.1 L791.1 341.4 L791.3 285.5 L791.5 325.2 L791.8 282.7 L792.0 328.0 L792.2 328.0 L792.5 318.0 L792.7 302.1 L792.9 334.5 L793.2 309.4 L793.4 348.0 L793.6 317.1 L793.9 335.3 L794.1 322.6 L794.3 291.1 L794.6 302.6 L794.8 313.7 L795.1 319.8 L795.3 338.6 L795.5 301.6 L795.8 322.4 L796.0 312.6 L796.2 285.5 L796.5 322.6 L796.7 312.4 L796.9 321.6 L797.2 317.8 L797.4 321.6 L797.6 301.5 L797.9 367.8 L798.1 310.9 L798.4 316.3 L798.6 318.1 L798.8 320.9 L799.1 334.4 L799.3 325.8 L799.5 302.3 L799.8 275.7 L800.0 331.2 L800.2 313.4 L800.5 313.2 L800.7 339.3 L800.9 305.8 L801.2 327.1 L801.4 311.5 L801.6 303.4 L801.9 292.5 L802.1 311.5 L802.4 327.4 L802.6 306.3 L802.8 317.3 L803.1 286.2 L803.3 319.3 L803.5 313.8 L803.8 318.6 L804.0 335.7 L804.2 279.9 L804.5 304.4 L804.7 289.9 L804.9 300.8 L805.2 319.5 L805.4 314.0 L805.7 327.9 L805.9 305.0 L806.1 363.0 L806.4 322.8 L806.6 322.8 L806.8 318.4 L807.1 299.7 L807.3 315.3 L807.5 335.8 L807.8 318.5 L808.0 312.1 L808.2 313.6 L808.5 319.9 L808.7 296.1 L808.9 318.0 L809.2 318.2 L809.4 309.8 L809.7 300.5 L809.9 292.8 L810.1 288.5 L810.4 318.0 L810.6 318.4 L810.8 318.7 L811.1 308.0 L811.3 314.0 L811.5 311.7 L811.8 272.9 L812.0 338.5 L812.2 315.9 L812.5 342.3 L812.7 302.5 L813.0 349.9 L813.2 308.5 L813.4 316.2 L813.7 295.6 L813.9 306.4 L814.1 303.5 L814.4 293.3 L814.6 333.5 L814.8 301.7 L815.1 290.0 L815.3 308.9 L815.5 302.1 L815.8 338.5 L816.0 291.1 L816.2 320.0 L816.5 306.0 L816.7 328.5 L817.0 301.2 L817.2 314.1 L817.4 322.6 L817.7 338.3 L817.9 331.4 L818.1 341.1 L818.4 341.5 L818.6 351.6 L818.8 304.6 L819.1 313.9 L819.3 281.4 L819.5 328.0 L819.8 288.3 L820.0 302.7 L820.3 324.5 L820.5 318.6 L820.7 323.7 L821.0 331.8 L821.2 319.5 L821.4 317.2 L821.7 283.0 L821.9 314.4 L822.1 313.9 L822.4 334.2 L822.6 331.4 L822.8 330.5 L823.1 332.0 L823.3 297.8 L823.6 337.9 L823.8 326.9 L824.0 351.0 L824.3 308.4 L824.5 333.0 L824.7 312.0 L825.0 313.1 L825.2 302.0 L825.4 320.4 L825.7 289.3 L825.9 319.4 L826.1 318.5 L826.4 304.3 L826.6 328.5 L826.8 299.0 L827.1 321.1 L827.3 309.7 L827.6 307.5 L827.8 318.8 L828.0 292.5 L828.3 330.1 L828.5 298.5 L828.7 340.9 L829.0 290.4 L829.2 336.0 L829.4 301.8 L829.7 338.0 L829.9 315.5 L830.1 299.1 L830.4 325.2 L830.6 325.0 L830.9 327.2 L831.1 297.7 L831.3 292.8 L831.6 290.7 L831.8 332.9 L832.0 359.6 L832.3 319.2 L832.5 294.2 L832.7 313.0 L833.0 306.5 L833.2 306.9 L833.4 327.1 L833.7 295.4 L833.9 307.1 L834.1 310.8 L834.4 314.5 L834.6 322.5 L834.9 306.4 L835.1 297.9 L835.3 313.6 L835.6 310.7 L835.8 320.3 L836.0 303.9 L836.3 316.2 L836.5 311.7 L836.7 304.6 L837.0 331.4 L837.2 297.4 L837.4 315.2 L837.7 299.6 L837.9 313.0 L838.2 321.0 L838.4 330.8 L838.6 315.5 L838.9 278.2 L839.1 286.2 L839.3 333.4 L839.6 327.2 L839.8 289.1 L840.0 318.3 L840.3 338.2 L840.5 339.4 L840.7 318.5 L841.0 312.0 L841.2 322.0 L841.4 313.0 L841.7 330.4 L841.9 285.8 L842.2 324.3 L842.4 311.9 L842.6 312.5 L842.9 329.1 L843.1 318.5 L843.3 330.8 L843.6 308.8 L843.8 295.3 L844.0 324.8 L844.3 320.9 L844.5 327.4 L844.7 302.9 L845.0 308.3 L845.2 304.6 L845.5 325.5 L845.7 334.4 L845.9 295.0 L846.2 334.7 L846.4 304.4 L846.6 345.1 L846.9 308.9 L847.1 321.9 L847.3 303.7 L847.6 317.6 L847.8 302.0 L848.0 318.2 L848.3 346.6 L848.5 308.7 L848.8 328.0 L849.0 297.1 L849.2 325.7 L849.5 340.1 L849.7 336.2 L849.9 325.7 L850.2 310.8 L850.4 293.4 L850.6 320.3 L850.9 321.7 L851.1 301.1 L851.3 281.2 L851.6 285.6 L851.8 261.7 L852.0 299.6 L852.3 283.0 L852.5 302.5 L852.8 327.3 L853.0 348.9 L853.2 337.1 L853.5 306.1 L853.7 308.7 L853.9 316.0 L854.2 318.2 L854.4 311.3 L854.6 323.6 L854.9 315.8 L855.1 332.2 L855.3 318.6 L855.6 332.8 L855.8 343.9 L856.1 316.6 L856.3 342.1 L856.5 333.4 L856.8 318.8 L857.0 325.2 L857.2 329.9 L857.5 286.6 L857.7 321.2 L857.9 329.6 L858.2 333.0 L858.4 300.1 L858.6 328.8 L858.9 272.0 L859.1 328.2 L859.3 322.9 L859.6 318.3 L859.8 319.8 L860.1 331.2 L860.3 326.6 L860.5 304.2 L860.8 308.1 L861.0 301.6 L861.2 285.9 L861.5 345.4 L861.7 321.5 L861.9 315.5 L862.2 314.0 L862.4 300.9 L862.6 352.0 L862.9 299.0 L863.1 348.3 L863.4 329.1 L863.6 329.3 L863.8 296.7 L864.1 316.8 L864.3 300.4 L864.5 298.0 L864.8 282.5 L865.0 348.6" fill="none" stroke="#5f89fa" stroke-width="1.3" stroke-opacity="0.94" stroke-linejoin="round"/><path d="M923.0 277.3 L923.2 306.0 L923.5 295.3 L923.7 273.5 L923.9 302.1 L924.2 320.1 L924.4 332.6 L924.6 317.5 L924.9 340.8 L925.1 298.0 L925.4 309.0 L925.6 327.2 L925.8 340.4 L926.1 322.8 L926.3 322.9 L926.5 320.6 L926.8 331.0 L927.0 302.0 L927.2 285.2 L927.5 330.1 L927.7 322.0 L927.9 327.9 L928.2 303.2 L928.4 320.4 L928.7 321.0 L928.9 306.5 L929.1 341.2 L929.4 331.7 L929.6 325.2 L929.8 345.8 L930.1 323.0 L930.3 339.2 L930.5 316.2 L930.8 277.8 L931.0 351.6 L931.2 317.4 L931.5 281.6 L931.7 316.5 L931.9 293.1 L932.2 335.5 L932.4 304.9 L932.7 339.6 L932.9 290.9 L933.1 290.1 L933.4 330.3 L933.6 294.2 L933.8 298.1 L934.1 327.4 L934.3 318.5 L934.5 292.1 L934.8 290.2 L935.0 338.5 L935.2 262.7 L935.5 317.2 L935.7 308.5 L936.0 334.0 L936.2 297.9 L936.4 281.2 L936.7 279.2 L936.9 304.9 L937.1 323.7 L937.4 325.3 L937.6 300.8 L937.8 290.0 L938.1 297.9 L938.3 307.1 L938.5 307.9 L938.8 309.5 L939.0 316.0 L939.2 288.5 L939.5 282.8 L939.7 309.6 L940.0 324.7 L940.2 325.3 L940.4 317.2 L940.7 321.7 L940.9 316.2 L941.1 293.6 L941.4 298.6 L941.6 335.8 L941.8 278.4 L942.1 304.1 L942.3 309.0 L942.5 305.9 L942.8 321.5 L943.0 318.8 L943.3 325.6 L943.5 308.9 L943.7 330.6 L944.0 310.5 L944.2 329.3 L944.4 307.6 L944.7 340.2 L944.9 312.3 L945.1 333.9 L945.4 304.7 L945.6 320.7 L945.8 297.7 L946.1 297.4 L946.3 306.0 L946.6 325.7 L946.8 316.1 L947.0 324.6 L947.3 294.0 L947.5 339.4 L947.7 313.5 L948.0 317.0 L948.2 283.5 L948.4 290.8 L948.7 283.9 L948.9 323.0 L949.1 303.2 L949.4 336.7 L949.6 281.6 L949.8 329.7 L950.1 355.9 L950.3 294.8 L950.6 316.9 L950.8 314.0 L951.0 320.6 L951.3 310.3 L951.5 327.7 L951.7 328.4 L952.0 291.6 L952.2 337.0 L952.4 317.0 L952.7 323.0 L952.9 298.8 L953.1 312.0 L953.4 317.7 L953.6 289.0 L953.9 312.3 L954.1 303.2 L954.3 308.7 L954.6 316.3 L954.8 311.5 L955.0 350.7 L955.3 284.6 L955.5 312.3 L955.7 319.6 L956.0 280.9 L956.2 318.3 L956.4 308.4 L956.7 324.0 L956.9 319.9 L957.1 305.7 L957.4 317.9 L957.6 342.4 L957.9 322.9 L958.1 278.0 L958.3 319.6 L958.6 342.1 L958.8 345.2 L959.0 298.7 L959.3 343.6 L959.5 324.7 L959.7 309.6 L960.0 319.1 L960.2 302.6 L960.4 311.8 L960.7 301.0 L960.9 322.8 L961.2 331.2 L961.4 299.1 L961.6 333.3 L961.9 321.3 L962.1 307.0 L962.3 332.8 L962.6 314.8 L962.8 324.8 L963.0 315.8 L963.3 334.6 L963.5 324.8 L963.7 316.3 L964.0 308.7 L964.2 322.6 L964.4 313.8 L964.7 336.1 L964.9 278.0 L965.2 312.5 L965.4 315.9 L965.6 323.6 L965.9 296.6 L966.1 281.3 L966.3 336.7 L966.6 308.8 L966.8 317.4 L967.0 314.9 L967.3 302.6 L967.5 309.0 L967.7 302.4 L968.0 302.1 L968.2 337.9 L968.5 295.7 L968.7 288.4 L968.9 310.6 L969.2 315.8 L969.4 289.4 L969.6 319.4 L969.9 309.6 L970.1 317.0 L970.3 322.0 L970.6 309.1 L970.8 329.4 L971.0 296.8 L971.3 299.4 L971.5 339.4 L971.8 360.2 L972.0 314.0 L972.2 307.5 L972.5 302.5 L972.7 321.9 L972.9 331.2 L973.2 331.1 L973.4 290.7 L973.6 318.4 L973.9 311.3 L974.1 325.8 L974.3 309.8 L974.6 334.3 L974.8 313.6 L975.0 339.6 L975.3 303.5 L975.5 301.2 L975.8 324.0 L976.0 322.9 L976.2 322.1 L976.5 301.9 L976.7 349.2 L976.9 306.2 L977.2 290.7 L977.4 266.0 L977.6 333.8 L977.9 350.9 L978.1 299.9 L978.3 332.6 L978.6 298.9 L978.8 311.9 L979.1 318.6 L979.3 290.1 L979.5 322.9 L979.8 309.9 L980.0 325.7 L980.2 330.3 L980.5 350.1 L980.7 310.0 L980.9 311.9 L981.2 324.0 L981.4 341.3 L981.6 317.1 L981.9 311.3 L982.1 299.6 L982.3 303.6 L982.6 355.8 L982.8 320.6 L983.1 332.8 L983.3 332.5 L983.5 347.5 L983.8 309.8 L984.0 312.0 L984.2 347.2 L984.5 340.6 L984.7 303.9 L984.9 321.4 L985.2 367.8 L985.4 290.5 L985.6 324.3 L985.9 309.4 L986.1 338.2 L986.4 312.8 L986.6 322.0 L986.8 286.1 L987.1 332.4 L987.3 324.3 L987.5 322.3 L987.8 277.0 L988.0 300.6 L988.2 309.8 L988.5 329.6 L988.7 301.7 L988.9 317.9 L989.2 280.8 L989.4 320.6 L989.6 284.0 L989.9 341.1 L990.1 325.8 L990.4 303.8 L990.6 330.2 L990.8 296.8 L991.1 311.3 L991.3 313.0 L991.5 315.5 L991.8 307.4 L992.0 311.5 L992.2 292.7 L992.5 334.8 L992.7 315.8 L992.9 308.2 L993.2 296.3 L993.4 312.0 L993.7 350.3 L993.9 272.5 L994.1 332.1 L994.4 300.0 L994.6 325.2 L994.8 322.4 L995.1 315.3 L995.3 302.8 L995.5 330.0 L995.8 294.9 L996.0 345.4 L996.2 297.7 L996.5 324.9 L996.7 323.4 L996.9 334.1 L997.2 283.6 L997.4 297.1 L997.7 313.7 L997.9 325.7 L998.1 313.6 L998.4 310.3 L998.6 356.4 L998.8 321.0 L999.1 298.5 L999.3 317.0 L999.5 286.6 L999.8 359.1 L1000.0 315.3 L1000.2 291.1 L1000.5 300.2 L1000.7 333.9 L1001.0 327.2 L1001.2 319.3 L1001.4 324.6 L1001.7 283.8 L1001.9 331.4 L1002.1 317.8 L1002.4 291.5 L1002.6 351.9 L1002.8 323.9 L1003.1 329.4 L1003.3 329.8 L1003.5 310.0 L1003.8 301.1 L1004.0 316.8 L1004.2 315.9 L1004.5 325.2 L1004.7 302.1 L1005.0 329.3 L1005.2 336.4 L1005.4 302.8 L1005.7 307.1 L1005.9 312.5 L1006.1 320.6 L1006.4 320.9 L1006.6 309.4 L1006.8 321.2 L1007.1 276.6 L1007.3 349.6 L1007.5 302.4 L1007.8 292.5 L1008.0 304.6 L1008.3 328.2 L1008.5 318.2 L1008.7 314.8 L1009.0 325.4 L1009.2 267.6 L1009.4 334.3 L1009.7 294.6 L1009.9 302.6 L1010.1 323.5 L1010.4 280.7 L1010.6 301.6 L1010.8 322.0 L1011.1 266.0 L1011.3 323.9 L1011.6 336.5 L1011.8 308.9 L1012.0 323.5 L1012.3 337.4 L1012.5 300.0 L1012.7 319.1 L1013.0 310.5 L1013.2 321.7 L1013.4 323.5 L1013.7 313.9 L1013.9 298.4 L1014.1 280.7 L1014.4 303.9 L1014.6 281.9 L1014.8 324.6 L1015.1 331.1 L1015.3 336.9 L1015.6 271.4 L1015.8 321.1 L1016.0 299.3 L1016.3 324.8 L1016.5 338.4 L1016.7 304.9 L1017.0 302.8 L1017.2 348.3 L1017.4 321.0 L1017.7 289.0 L1017.9 359.1 L1018.1 319.0 L1018.4 336.8 L1018.6 303.7 L1018.9 308.5 L1019.1 311.1 L1019.3 339.4 L1019.6 302.0 L1019.8 295.5 L1020.0 334.5 L1020.3 290.1 L1020.5 301.9 L1020.7 308.9 L1021.0 304.4 L1021.2 289.8 L1021.4 293.9 L1021.7 354.5 L1021.9 335.3 L1022.1 307.4 L1022.4 280.6 L1022.6 333.5 L1022.9 324.1 L1023.1 323.4 L1023.3 339.0 L1023.6 320.3 L1023.8 311.6 L1024.0 325.5 L1024.3 319.4 L1024.5 341.1 L1024.7 317.5 L1025.0 302.6 L1025.2 298.4 L1025.4 317.0 L1025.7 327.9 L1025.9 314.3 L1026.2 293.0 L1026.4 315.7 L1026.6 321.4 L1026.9 327.9 L1027.1 337.1 L1027.3 292.3 L1027.6 330.3 L1027.8 307.2 L1028.0 322.3 L1028.3 275.7 L1028.5 301.9 L1028.7 316.4 L1029.0 327.7 L1029.2 313.0 L1029.4 306.2 L1029.7 301.6 L1029.9 337.8 L1030.2 318.3 L1030.4 336.5 L1030.6 330.4 L1030.9 309.9 L1031.1 306.4 L1031.3 314.3 L1031.6 306.6 L1031.8 312.5 L1032.0 305.6 L1032.3 307.7 L1032.5 333.7 L1032.7 307.7 L1033.0 343.3 L1033.2 358.1 L1033.5 320.3 L1033.7 330.3 L1033.9 316.9 L1034.2 309.9 L1034.4 329.1 L1034.6 337.9 L1034.9 302.9 L1035.1 325.5 L1035.3 320.1 L1035.6 307.4 L1035.8 278.5 L1036.0 336.4 L1036.3 347.4 L1036.5 308.0 L1036.8 314.9 L1037.0 326.5 L1037.2 342.4 L1037.5 310.4 L1037.7 326.4 L1037.9 306.8 L1038.2 321.4 L1038.4 319.7 L1038.6 294.5 L1038.9 331.9 L1039.1 305.1 L1039.3 311.0 L1039.6 298.3 L1039.8 344.6 L1040.0 359.1 L1040.3 317.6 L1040.5 292.2 L1040.8 287.7 L1041.0 301.5 L1041.2 312.2 L1041.5 331.9 L1041.7 303.3 L1041.9 324.3 L1042.2 333.3 L1042.4 295.5 L1042.6 298.0 L1042.9 325.6 L1043.1 280.9 L1043.3 270.3 L1043.6 316.5 L1043.8 297.6 L1044.1 325.4 L1044.3 327.9 L1044.5 321.0 L1044.8 329.2 L1045.0 316.5 L1045.2 295.8 L1045.5 270.3 L1045.7 311.2 L1045.9 318.9 L1046.2 327.7 L1046.4 321.1 L1046.6 331.4 L1046.9 314.9 L1047.1 302.3 L1047.3 354.7 L1047.6 294.0 L1047.8 318.9 L1048.1 326.2 L1048.3 334.6 L1048.5 331.5 L1048.8 302.0 L1049.0 290.2 L1049.2 358.1 L1049.5 290.5 L1049.7 318.3 L1049.9 327.3 L1050.2 289.3 L1050.4 297.0 L1050.6 331.5 L1050.9 322.5 L1051.1 274.5 L1051.4 281.7 L1051.6 304.1 L1051.8 317.7 L1052.1 328.2 L1052.3 325.9 L1052.5 305.0 L1052.8 337.6 L1053.0 296.5 L1053.2 341.2 L1053.5 291.3 L1053.7 321.4 L1053.9 334.0 L1054.2 302.3 L1054.4 306.3 L1054.6 313.6 L1054.9 303.8 L1055.1 302.7 L1055.4 283.9 L1055.6 304.9 L1055.8 317.9 L1056.1 311.6 L1056.3 299.3 L1056.5 284.9 L1056.8 317.7 L1057.0 293.0 L1057.2 322.6 L1057.5 321.7 L1057.7 338.6 L1057.9 296.5 L1058.2 299.8 L1058.4 305.6 L1058.7 324.9 L1058.9 336.9 L1059.1 318.5 L1059.4 333.1 L1059.6 361.8 L1059.8 300.1 L1060.1 346.8 L1060.3 315.3 L1060.5 298.5 L1060.8 339.4 L1061.0 333.2 L1061.2 307.2 L1061.5 315.3 L1061.7 328.9 L1061.9 332.5 L1062.2 326.9 L1062.4 344.5 L1062.7 339.7 L1062.9 334.2 L1063.1 339.7 L1063.4 306.8 L1063.6 323.7 L1063.8 294.6 L1064.1 306.5 L1064.3 299.7 L1064.5 334.9 L1064.8 299.2 L1065.0 333.6 L1065.2 316.1 L1065.5 321.8 L1065.7 315.2 L1066.0 321.3 L1066.2 294.5 L1066.4 309.9 L1066.7 277.3 L1066.9 322.7 L1067.1 275.3 L1067.4 305.6 L1067.6 314.9 L1067.8 311.7 L1068.1 284.2 L1068.3 275.2 L1068.5 303.5 L1068.8 280.5 L1069.0 307.3 L1069.2 331.9 L1069.5 315.7 L1069.7 301.7 L1070.0 297.8 L1070.2 320.1 L1070.4 319.6 L1070.7 325.9 L1070.9 295.9 L1071.1 308.6 L1071.4 328.9 L1071.6 316.4 L1071.8 323.3 L1072.1 313.6 L1072.3 304.0 L1072.5 330.0 L1072.8 313.6 L1073.0 285.0 L1073.3 359.4 L1073.5 332.8 L1073.7 326.5 L1074.0 270.9 L1074.2 313.9 L1074.4 307.9 L1074.7 324.9 L1074.9 329.1 L1075.1 303.6 L1075.4 307.8 L1075.6 301.4 L1075.8 306.7 L1076.1 320.7 L1076.3 330.1 L1076.6 291.3 L1076.8 278.1 L1077.0 345.8 L1077.3 320.2 L1077.5 332.9 L1077.7 309.1 L1078.0 312.6 L1078.2 298.5 L1078.4 293.1 L1078.7 321.2 L1078.9 295.9 L1079.1 295.5 L1079.4 313.3 L1079.6 326.9 L1079.8 297.3 L1080.1 291.0 L1080.3 328.9 L1080.6 283.6 L1080.8 309.9 L1081.0 326.5 L1081.3 294.3 L1081.5 310.4 L1081.7 294.2 L1082.0 303.7 L1082.2 319.1 L1082.4 331.8 L1082.7 320.9 L1082.9 307.8 L1083.1 285.0 L1083.4 332.0 L1083.6 320.1 L1083.9 338.3 L1084.1 312.5 L1084.3 319.0 L1084.6 304.1 L1084.8 293.3 L1085.0 315.9 L1085.3 273.6 L1085.5 323.5 L1085.7 294.3 L1086.0 326.5 L1086.2 346.0 L1086.4 279.0 L1086.7 343.7 L1086.9 316.5 L1087.1 319.5 L1087.4 310.9 L1087.6 351.7 L1087.9 293.1 L1088.1 285.0 L1088.3 302.2 L1088.6 329.1 L1088.8 295.3 L1089.0 311.5 L1089.3 324.6 L1089.5 312.6 L1089.7 285.8 L1090.0 331.0 L1090.2 323.9 L1090.4 331.1 L1090.7 312.6 L1090.9 328.2 L1091.2 320.1 L1091.4 316.3 L1091.6 310.2 L1091.9 328.2 L1092.1 331.9 L1092.3 284.9 L1092.6 316.1 L1092.8 336.5 L1093.0 314.4 L1093.3 292.8 L1093.5 303.9 L1093.7 282.3 L1094.0 320.2 L1094.2 282.4 L1094.4 329.2 L1094.7 306.7 L1094.9 319.2 L1095.2 324.9 L1095.4 319.7 L1095.6 361.3 L1095.9 295.7 L1096.1 316.9 L1096.3 287.8 L1096.6 308.9 L1096.8 303.4 L1097.0 315.5 L1097.3 301.8 L1097.5 345.0 L1097.7 323.1 L1098.0 364.6 L1098.2 303.2 L1098.5 312.4 L1098.7 308.9 L1098.9 310.3 L1099.2 328.4 L1099.4 334.5 L1099.6 304.7 L1099.9 306.0 L1100.1 336.5 L1100.3 337.9 L1100.6 320.7 L1100.8 306.8 L1101.0 295.9 L1101.3 294.5 L1101.5 321.8 L1101.8 352.7 L1102.0 302.8 L1102.2 330.8 L1102.5 300.2 L1102.7 301.9 L1102.9 284.2 L1103.2 351.4 L1103.4 327.8 L1103.6 308.2 L1103.9 291.6 L1104.1 321.4 L1104.3 284.6 L1104.6 305.5 L1104.8 293.2 L1105.0 290.8 L1105.3 319.5 L1105.5 350.5 L1105.8 324.0 L1106.0 317.6 L1106.2 312.2 L1106.5 315.3 L1106.7 333.9 L1106.9 297.5 L1107.2 325.8 L1107.4 317.6 L1107.6 311.6 L1107.9 319.5 L1108.1 346.4 L1108.3 307.6 L1108.6 328.3 L1108.8 312.9 L1109.1 337.3 L1109.3 306.9 L1109.5 336.0 L1109.8 318.2 L1110.0 332.9 L1110.2 301.1 L1110.5 334.6 L1110.7 336.2 L1110.9 312.3 L1111.2 292.6 L1111.4 323.1 L1111.6 304.8 L1111.9 312.9 L1112.1 314.4 L1112.3 284.0 L1112.6 292.3 L1112.8 291.2 L1113.1 321.9 L1113.3 334.4 L1113.5 313.9 L1113.8 323.5 L1114.0 327.7 L1114.2 313.0 L1114.5 324.5 L1114.7 324.1 L1114.9 332.7 L1115.2 320.7 L1115.4 360.2 L1115.6 325.6 L1115.9 311.7 L1116.1 333.8 L1116.4 326.2 L1116.6 295.6 L1116.8 330.4 L1117.1 305.8 L1117.3 313.4 L1117.5 332.4 L1117.8 340.9 L1118.0 339.0 L1118.2 315.0 L1118.5 316.4 L1118.7 299.5 L1118.9 317.0 L1119.2 320.7 L1119.4 324.9 L1119.6 302.2 L1119.9 325.2 L1120.1 332.9 L1120.4 292.4 L1120.6 328.7 L1120.8 284.6 L1121.1 296.9 L1121.3 259.5 L1121.5 301.7 L1121.8 282.2 L1122.0 307.4 L1122.2 328.8 L1122.5 334.8 L1122.7 299.2 L1122.9 301.0 L1123.2 327.7 L1123.4 282.6 L1123.7 306.7 L1123.9 322.4 L1124.1 348.1 L1124.4 292.3 L1124.6 311.0 L1124.8 321.4 L1125.1 307.6 L1125.3 331.0 L1125.5 320.4 L1125.8 318.7 L1126.0 282.3 L1126.2 320.1 L1126.5 300.7 L1126.7 303.6 L1126.9 317.8 L1127.2 333.8 L1127.4 289.1 L1127.7 331.5 L1127.9 331.2 L1128.1 281.3 L1128.4 346.3 L1128.6 301.4 L1128.8 283.2 L1129.1 343.1 L1129.3 281.0 L1129.5 320.4 L1129.8 312.2 L1130.0 281.9 L1130.2 347.4 L1130.5 323.2 L1130.7 337.8 L1131.0 288.9 L1131.2 313.7 L1131.4 340.9 L1131.7 341.7 L1131.9 345.2 L1132.1 301.7 L1132.4 307.1 L1132.6 294.5 L1132.8 308.6 L1133.1 312.2 L1133.3 292.1 L1133.5 292.9 L1133.8 323.9 L1134.0 335.6 L1134.2 319.1 L1134.5 283.6 L1134.7 341.2 L1135.0 326.9 L1135.2 290.3 L1135.4 314.4 L1135.7 303.9 L1135.9 333.4 L1136.1 278.6 L1136.4 304.1 L1136.6 316.2 L1136.8 319.0 L1137.1 337.4 L1137.3 309.3 L1137.5 313.7 L1137.8 311.7 L1138.0 293.4 L1138.3 312.1 L1138.5 326.4 L1138.7 260.6 L1139.0 304.4 L1139.2 288.7 L1139.4 306.8 L1139.7 303.4 L1139.9 337.9 L1140.1 298.6 L1140.4 316.1 L1140.6 291.4 L1140.8 284.0 L1141.1 327.3 L1141.3 331.7 L1141.6 309.8 L1141.8 335.3 L1142.0 321.3 L1142.3 324.8 L1142.5 346.2 L1142.7 328.1 L1143.0 328.5 L1143.2 312.9 L1143.4 294.4 L1143.7 335.3 L1143.9 320.9 L1144.1 316.3 L1144.4 336.8 L1144.6 325.2 L1144.8 333.4 L1145.1 326.4 L1145.3 332.9 L1145.6 310.7 L1145.8 309.7 L1146.0 307.0 L1146.3 317.6 L1146.5 317.0 L1146.7 289.8 L1147.0 309.1 L1147.2 293.4 L1147.4 312.2 L1147.7 305.9 L1147.9 332.7 L1148.1 278.9 L1148.4 303.1 L1148.6 301.7 L1148.9 321.4 L1149.1 344.6 L1149.3 311.2 L1149.6 268.2 L1149.8 322.1 L1150.0 319.8 L1150.3 320.8 L1150.5 313.1 L1150.7 337.1 L1151.0 329.3 L1151.2 307.1 L1151.4 299.5 L1151.7 314.5 L1151.9 314.8 L1152.1 287.6 L1152.4 319.8 L1152.6 312.5 L1152.9 285.2 L1153.1 345.8 L1153.3 310.3 L1153.6 316.4 L1153.8 305.8 L1154.0 295.4 L1154.3 309.3 L1154.5 309.1 L1154.7 325.3 L1155.0 318.4 L1155.2 312.6 L1155.4 317.4 L1155.7 336.9 L1155.9 295.7 L1156.2 326.5 L1156.4 330.5 L1156.6 310.9 L1156.9 310.3 L1157.1 297.2 L1157.3 304.6 L1157.6 318.5 L1157.8 318.4 L1158.0 285.4 L1158.3 317.7 L1158.5 302.4 L1158.7 342.5 L1159.0 308.6 L1159.2 313.6 L1159.4 295.9 L1159.7 310.8 L1159.9 308.2 L1160.2 301.1 L1160.4 332.1 L1160.6 327.4 L1160.9 317.2 L1161.1 323.8 L1161.3 305.1 L1161.6 338.7 L1161.8 323.7 L1162.0 313.6 L1162.3 317.2 L1162.5 336.8 L1162.7 352.1 L1163.0 323.1 L1163.2 338.6 L1163.5 319.9 L1163.7 322.6 L1163.9 325.3 L1164.2 270.9 L1164.4 305.5 L1164.6 341.9 L1164.9 308.8 L1165.1 323.7 L1165.3 306.5 L1165.6 310.7 L1165.8 342.3 L1166.0 316.0 L1166.3 327.2 L1166.5 289.9 L1166.8 307.5 L1167.0 296.7 L1167.2 327.5 L1167.5 320.1 L1167.7 313.8 L1167.9 282.5 L1168.2 323.4 L1168.4 311.6 L1168.6 310.7 L1168.9 311.5 L1169.1 313.5 L1169.3 315.0 L1169.6 329.4 L1169.8 305.7 L1170.0 297.6 L1170.3 319.9 L1170.5 316.2 L1170.8 319.3 L1171.0 315.5 L1171.2 308.7 L1171.5 304.3 L1171.7 291.1 L1171.9 285.4 L1172.2 337.9 L1172.4 336.1 L1172.6 318.9 L1172.9 342.6 L1173.1 338.7 L1173.3 339.5 L1173.6 309.2 L1173.8 327.9 L1174.1 324.7 L1174.3 288.2 L1174.5 307.4 L1174.8 324.6 L1175.0 345.3 L1175.2 331.4 L1175.5 297.6 L1175.7 325.7 L1175.9 311.1 L1176.2 297.5 L1176.4 298.5 L1176.6 309.3 L1176.9 312.7 L1177.1 307.4 L1177.3 318.5 L1177.6 327.9 L1177.8 298.2 L1178.1 341.1 L1178.3 319.8 L1178.5 311.4 L1178.8 317.5 L1179.0 315.2 L1179.2 323.5 L1179.5 320.7 L1179.7 329.2 L1179.9 326.4 L1180.2 312.7 L1180.4 319.1 L1180.6 307.0 L1180.9 307.5 L1181.1 316.1 L1181.4 329.7 L1181.6 341.9 L1181.8 310.9 L1182.1 327.9 L1182.3 294.7 L1182.5 316.0 L1182.8 331.5 L1183.0 324.6 L1183.0 367.8 L923.0 367.8 Z" fill="#5580f8" fill-opacity="0.28" stroke="none"/><path d="M923.0 277.3 L923.2 306.0 L923.5 295.3 L923.7 273.5 L923.9 302.1 L924.2 320.1 L924.4 332.6 L924.6 317.5 L924.9 340.8 L925.1 298.0 L925.4 309.0 L925.6 327.2 L925.8 340.4 L926.1 322.8 L926.3 322.9 L926.5 320.6 L926.8 331.0 L927.0 302.0 L927.2 285.2 L927.5 330.1 L927.7 322.0 L927.9 327.9 L928.2 303.2 L928.4 320.4 L928.7 321.0 L928.9 306.5 L929.1 341.2 L929.4 331.7 L929.6 325.2 L929.8 345.8 L930.1 323.0 L930.3 339.2 L930.5 316.2 L930.8 277.8 L931.0 351.6 L931.2 317.4 L931.5 281.6 L931.7 316.5 L931.9 293.1 L932.2 335.5 L932.4 304.9 L932.7 339.6 L932.9 290.9 L933.1 290.1 L933.4 330.3 L933.6 294.2 L933.8 298.1 L934.1 327.4 L934.3 318.5 L934.5 292.1 L934.8 290.2 L935.0 338.5 L935.2 262.7 L935.5 317.2 L935.7 308.5 L936.0 334.0 L936.2 297.9 L936.4 281.2 L936.7 279.2 L936.9 304.9 L937.1 323.7 L937.4 325.3 L937.6 300.8 L937.8 290.0 L938.1 297.9 L938.3 307.1 L938.5 307.9 L938.8 309.5 L939.0 316.0 L939.2 288.5 L939.5 282.8 L939.7 309.6 L940.0 324.7 L940.2 325.3 L940.4 317.2 L940.7 321.7 L940.9 316.2 L941.1 293.6 L941.4 298.6 L941.6 335.8 L941.8 278.4 L942.1 304.1 L942.3 309.0 L942.5 305.9 L942.8 321.5 L943.0 318.8 L943.3 325.6 L943.5 308.9 L943.7 330.6 L944.0 310.5 L944.2 329.3 L944.4 307.6 L944.7 340.2 L944.9 312.3 L945.1 333.9 L945.4 304.7 L945.6 320.7 L945.8 297.7 L946.1 297.4 L946.3 306.0 L946.6 325.7 L946.8 316.1 L947.0 324.6 L947.3 294.0 L947.5 339.4 L947.7 313.5 L948.0 317.0 L948.2 283.5 L948.4 290.8 L948.7 283.9 L948.9 323.0 L949.1 303.2 L949.4 336.7 L949.6 281.6 L949.8 329.7 L950.1 355.9 L950.3 294.8 L950.6 316.9 L950.8 314.0 L951.0 320.6 L951.3 310.3 L951.5 327.7 L951.7 328.4 L952.0 291.6 L952.2 337.0 L952.4 317.0 L952.7 323.0 L952.9 298.8 L953.1 312.0 L953.4 317.7 L953.6 289.0 L953.9 312.3 L954.1 303.2 L954.3 308.7 L954.6 316.3 L954.8 311.5 L955.0 350.7 L955.3 284.6 L955.5 312.3 L955.7 319.6 L956.0 280.9 L956.2 318.3 L956.4 308.4 L956.7 324.0 L956.9 319.9 L957.1 305.7 L957.4 317.9 L957.6 342.4 L957.9 322.9 L958.1 278.0 L958.3 319.6 L958.6 342.1 L958.8 345.2 L959.0 298.7 L959.3 343.6 L959.5 324.7 L959.7 309.6 L960.0 319.1 L960.2 302.6 L960.4 311.8 L960.7 301.0 L960.9 322.8 L961.2 331.2 L961.4 299.1 L961.6 333.3 L961.9 321.3 L962.1 307.0 L962.3 332.8 L962.6 314.8 L962.8 324.8 L963.0 315.8 L963.3 334.6 L963.5 324.8 L963.7 316.3 L964.0 308.7 L964.2 322.6 L964.4 313.8 L964.7 336.1 L964.9 278.0 L965.2 312.5 L965.4 315.9 L965.6 323.6 L965.9 296.6 L966.1 281.3 L966.3 336.7 L966.6 308.8 L966.8 317.4 L967.0 314.9 L967.3 302.6 L967.5 309.0 L967.7 302.4 L968.0 302.1 L968.2 337.9 L968.5 295.7 L968.7 288.4 L968.9 310.6 L969.2 315.8 L969.4 289.4 L969.6 319.4 L969.9 309.6 L970.1 317.0 L970.3 322.0 L970.6 309.1 L970.8 329.4 L971.0 296.8 L971.3 299.4 L971.5 339.4 L971.8 360.2 L972.0 314.0 L972.2 307.5 L972.5 302.5 L972.7 321.9 L972.9 331.2 L973.2 331.1 L973.4 290.7 L973.6 318.4 L973.9 311.3 L974.1 325.8 L974.3 309.8 L974.6 334.3 L974.8 313.6 L975.0 339.6 L975.3 303.5 L975.5 301.2 L975.8 324.0 L976.0 322.9 L976.2 322.1 L976.5 301.9 L976.7 349.2 L976.9 306.2 L977.2 290.7 L977.4 266.0 L977.6 333.8 L977.9 350.9 L978.1 299.9 L978.3 332.6 L978.6 298.9 L978.8 311.9 L979.1 318.6 L979.3 290.1 L979.5 322.9 L979.8 309.9 L980.0 325.7 L980.2 330.3 L980.5 350.1 L980.7 310.0 L980.9 311.9 L981.2 324.0 L981.4 341.3 L981.6 317.1 L981.9 311.3 L982.1 299.6 L982.3 303.6 L982.6 355.8 L982.8 320.6 L983.1 332.8 L983.3 332.5 L983.5 347.5 L983.8 309.8 L984.0 312.0 L984.2 347.2 L984.5 340.6 L984.7 303.9 L984.9 321.4 L985.2 367.8 L985.4 290.5 L985.6 324.3 L985.9 309.4 L986.1 338.2 L986.4 312.8 L986.6 322.0 L986.8 286.1 L987.1 332.4 L987.3 324.3 L987.5 322.3 L987.8 277.0 L988.0 300.6 L988.2 309.8 L988.5 329.6 L988.7 301.7 L988.9 317.9 L989.2 280.8 L989.4 320.6 L989.6 284.0 L989.9 341.1 L990.1 325.8 L990.4 303.8 L990.6 330.2 L990.8 296.8 L991.1 311.3 L991.3 313.0 L991.5 315.5 L991.8 307.4 L992.0 311.5 L992.2 292.7 L992.5 334.8 L992.7 315.8 L992.9 308.2 L993.2 296.3 L993.4 312.0 L993.7 350.3 L993.9 272.5 L994.1 332.1 L994.4 300.0 L994.6 325.2 L994.8 322.4 L995.1 315.3 L995.3 302.8 L995.5 330.0 L995.8 294.9 L996.0 345.4 L996.2 297.7 L996.5 324.9 L996.7 323.4 L996.9 334.1 L997.2 283.6 L997.4 297.1 L997.7 313.7 L997.9 325.7 L998.1 313.6 L998.4 310.3 L998.6 356.4 L998.8 321.0 L999.1 298.5 L999.3 317.0 L999.5 286.6 L999.8 359.1 L1000.0 315.3 L1000.2 291.1 L1000.5 300.2 L1000.7 333.9 L1001.0 327.2 L1001.2 319.3 L1001.4 324.6 L1001.7 283.8 L1001.9 331.4 L1002.1 317.8 L1002.4 291.5 L1002.6 351.9 L1002.8 323.9 L1003.1 329.4 L1003.3 329.8 L1003.5 310.0 L1003.8 301.1 L1004.0 316.8 L1004.2 315.9 L1004.5 325.2 L1004.7 302.1 L1005.0 329.3 L1005.2 336.4 L1005.4 302.8 L1005.7 307.1 L1005.9 312.5 L1006.1 320.6 L1006.4 320.9 L1006.6 309.4 L1006.8 321.2 L1007.1 276.6 L1007.3 349.6 L1007.5 302.4 L1007.8 292.5 L1008.0 304.6 L1008.3 328.2 L1008.5 318.2 L1008.7 314.8 L1009.0 325.4 L1009.2 267.6 L1009.4 334.3 L1009.7 294.6 L1009.9 302.6 L1010.1 323.5 L1010.4 280.7 L1010.6 301.6 L1010.8 322.0 L1011.1 266.0 L1011.3 323.9 L1011.6 336.5 L1011.8 308.9 L1012.0 323.5 L1012.3 337.4 L1012.5 300.0 L1012.7 319.1 L1013.0 310.5 L1013.2 321.7 L1013.4 323.5 L1013.7 313.9 L1013.9 298.4 L1014.1 280.7 L1014.4 303.9 L1014.6 281.9 L1014.8 324.6 L1015.1 331.1 L1015.3 336.9 L1015.6 271.4 L1015.8 321.1 L1016.0 299.3 L1016.3 324.8 L1016.5 338.4 L1016.7 304.9 L1017.0 302.8 L1017.2 348.3 L1017.4 321.0 L1017.7 289.0 L1017.9 359.1 L1018.1 319.0 L1018.4 336.8 L1018.6 303.7 L1018.9 308.5 L1019.1 311.1 L1019.3 339.4 L1019.6 302.0 L1019.8 295.5 L1020.0 334.5 L1020.3 290.1 L1020.5 301.9 L1020.7 308.9 L1021.0 304.4 L1021.2 289.8 L1021.4 293.9 L1021.7 354.5 L1021.9 335.3 L1022.1 307.4 L1022.4 280.6 L1022.6 333.5 L1022.9 324.1 L1023.1 323.4 L1023.3 339.0 L1023.6 320.3 L1023.8 311.6 L1024.0 325.5 L1024.3 319.4 L1024.5 341.1 L1024.7 317.5 L1025.0 302.6 L1025.2 298.4 L1025.4 317.0 L1025.7 327.9 L1025.9 314.3 L1026.2 293.0 L1026.4 315.7 L1026.6 321.4 L1026.9 327.9 L1027.1 337.1 L1027.3 292.3 L1027.6 330.3 L1027.8 307.2 L1028.0 322.3 L1028.3 275.7 L1028.5 301.9 L1028.7 316.4 L1029.0 327.7 L1029.2 313.0 L1029.4 306.2 L1029.7 301.6 L1029.9 337.8 L1030.2 318.3 L1030.4 336.5 L1030.6 330.4 L1030.9 309.9 L1031.1 306.4 L1031.3 314.3 L1031.6 306.6 L1031.8 312.5 L1032.0 305.6 L1032.3 307.7 L1032.5 333.7 L1032.7 307.7 L1033.0 343.3 L1033.2 358.1 L1033.5 320.3 L1033.7 330.3 L1033.9 316.9 L1034.2 309.9 L1034.4 329.1 L1034.6 337.9 L1034.9 302.9 L1035.1 325.5 L1035.3 320.1 L1035.6 307.4 L1035.8 278.5 L1036.0 336.4 L1036.3 347.4 L1036.5 308.0 L1036.8 314.9 L1037.0 326.5 L1037.2 342.4 L1037.5 310.4 L1037.7 326.4 L1037.9 306.8 L1038.2 321.4 L1038.4 319.7 L1038.6 294.5 L1038.9 331.9 L1039.1 305.1 L1039.3 311.0 L1039.6 298.3 L1039.8 344.6 L1040.0 359.1 L1040.3 317.6 L1040.5 292.2 L1040.8 287.7 L1041.0 301.5 L1041.2 312.2 L1041.5 331.9 L1041.7 303.3 L1041.9 324.3 L1042.2 333.3 L1042.4 295.5 L1042.6 298.0 L1042.9 325.6 L1043.1 280.9 L1043.3 270.3 L1043.6 316.5 L1043.8 297.6 L1044.1 325.4 L1044.3 327.9 L1044.5 321.0 L1044.8 329.2 L1045.0 316.5 L1045.2 295.8 L1045.5 270.3 L1045.7 311.2 L1045.9 318.9 L1046.2 327.7 L1046.4 321.1 L1046.6 331.4 L1046.9 314.9 L1047.1 302.3 L1047.3 354.7 L1047.6 294.0 L1047.8 318.9 L1048.1 326.2 L1048.3 334.6 L1048.5 331.5 L1048.8 302.0 L1049.0 290.2 L1049.2 358.1 L1049.5 290.5 L1049.7 318.3 L1049.9 327.3 L1050.2 289.3 L1050.4 297.0 L1050.6 331.5 L1050.9 322.5 L1051.1 274.5 L1051.4 281.7 L1051.6 304.1 L1051.8 317.7 L1052.1 328.2 L1052.3 325.9 L1052.5 305.0 L1052.8 337.6 L1053.0 296.5 L1053.2 341.2 L1053.5 291.3 L1053.7 321.4 L1053.9 334.0 L1054.2 302.3 L1054.4 306.3 L1054.6 313.6 L1054.9 303.8 L1055.1 302.7 L1055.4 283.9 L1055.6 304.9 L1055.8 317.9 L1056.1 311.6 L1056.3 299.3 L1056.5 284.9 L1056.8 317.7 L1057.0 293.0 L1057.2 322.6 L1057.5 321.7 L1057.7 338.6 L1057.9 296.5 L1058.2 299.8 L1058.4 305.6 L1058.7 324.9 L1058.9 336.9 L1059.1 318.5 L1059.4 333.1 L1059.6 361.8 L1059.8 300.1 L1060.1 346.8 L1060.3 315.3 L1060.5 298.5 L1060.8 339.4 L1061.0 333.2 L1061.2 307.2 L1061.5 315.3 L1061.7 328.9 L1061.9 332.5 L1062.2 326.9 L1062.4 344.5 L1062.7 339.7 L1062.9 334.2 L1063.1 339.7 L1063.4 306.8 L1063.6 323.7 L1063.8 294.6 L1064.1 306.5 L1064.3 299.7 L1064.5 334.9 L1064.8 299.2 L1065.0 333.6 L1065.2 316.1 L1065.5 321.8 L1065.7 315.2 L1066.0 321.3 L1066.2 294.5 L1066.4 309.9 L1066.7 277.3 L1066.9 322.7 L1067.1 275.3 L1067.4 305.6 L1067.6 314.9 L1067.8 311.7 L1068.1 284.2 L1068.3 275.2 L1068.5 303.5 L1068.8 280.5 L1069.0 307.3 L1069.2 331.9 L1069.5 315.7 L1069.7 301.7 L1070.0 297.8 L1070.2 320.1 L1070.4 319.6 L1070.7 325.9 L1070.9 295.9 L1071.1 308.6 L1071.4 328.9 L1071.6 316.4 L1071.8 323.3 L1072.1 313.6 L1072.3 304.0 L1072.5 330.0 L1072.8 313.6 L1073.0 285.0 L1073.3 359.4 L1073.5 332.8 L1073.7 326.5 L1074.0 270.9 L1074.2 313.9 L1074.4 307.9 L1074.7 324.9 L1074.9 329.1 L1075.1 303.6 L1075.4 307.8 L1075.6 301.4 L1075.8 306.7 L1076.1 320.7 L1076.3 330.1 L1076.6 291.3 L1076.8 278.1 L1077.0 345.8 L1077.3 320.2 L1077.5 332.9 L1077.7 309.1 L1078.0 312.6 L1078.2 298.5 L1078.4 293.1 L1078.7 321.2 L1078.9 295.9 L1079.1 295.5 L1079.4 313.3 L1079.6 326.9 L1079.8 297.3 L1080.1 291.0 L1080.3 328.9 L1080.6 283.6 L1080.8 309.9 L1081.0 326.5 L1081.3 294.3 L1081.5 310.4 L1081.7 294.2 L1082.0 303.7 L1082.2 319.1 L1082.4 331.8 L1082.7 320.9 L1082.9 307.8 L1083.1 285.0 L1083.4 332.0 L1083.6 320.1 L1083.9 338.3 L1084.1 312.5 L1084.3 319.0 L1084.6 304.1 L1084.8 293.3 L1085.0 315.9 L1085.3 273.6 L1085.5 323.5 L1085.7 294.3 L1086.0 326.5 L1086.2 346.0 L1086.4 279.0 L1086.7 343.7 L1086.9 316.5 L1087.1 319.5 L1087.4 310.9 L1087.6 351.7 L1087.9 293.1 L1088.1 285.0 L1088.3 302.2 L1088.6 329.1 L1088.8 295.3 L1089.0 311.5 L1089.3 324.6 L1089.5 312.6 L1089.7 285.8 L1090.0 331.0 L1090.2 323.9 L1090.4 331.1 L1090.7 312.6 L1090.9 328.2 L1091.2 320.1 L1091.4 316.3 L1091.6 310.2 L1091.9 328.2 L1092.1 331.9 L1092.3 284.9 L1092.6 316.1 L1092.8 336.5 L1093.0 314.4 L1093.3 292.8 L1093.5 303.9 L1093.7 282.3 L1094.0 320.2 L1094.2 282.4 L1094.4 329.2 L1094.7 306.7 L1094.9 319.2 L1095.2 324.9 L1095.4 319.7 L1095.6 361.3 L1095.9 295.7 L1096.1 316.9 L1096.3 287.8 L1096.6 308.9 L1096.8 303.4 L1097.0 315.5 L1097.3 301.8 L1097.5 345.0 L1097.7 323.1 L1098.0 364.6 L1098.2 303.2 L1098.5 312.4 L1098.7 308.9 L1098.9 310.3 L1099.2 328.4 L1099.4 334.5 L1099.6 304.7 L1099.9 306.0 L1100.1 336.5 L1100.3 337.9 L1100.6 320.7 L1100.8 306.8 L1101.0 295.9 L1101.3 294.5 L1101.5 321.8 L1101.8 352.7 L1102.0 302.8 L1102.2 330.8 L1102.5 300.2 L1102.7 301.9 L1102.9 284.2 L1103.2 351.4 L1103.4 327.8 L1103.6 308.2 L1103.9 291.6 L1104.1 321.4 L1104.3 284.6 L1104.6 305.5 L1104.8 293.2 L1105.0 290.8 L1105.3 319.5 L1105.5 350.5 L1105.8 324.0 L1106.0 317.6 L1106.2 312.2 L1106.5 315.3 L1106.7 333.9 L1106.9 297.5 L1107.2 325.8 L1107.4 317.6 L1107.6 311.6 L1107.9 319.5 L1108.1 346.4 L1108.3 307.6 L1108.6 328.3 L1108.8 312.9 L1109.1 337.3 L1109.3 306.9 L1109.5 336.0 L1109.8 318.2 L1110.0 332.9 L1110.2 301.1 L1110.5 334.6 L1110.7 336.2 L1110.9 312.3 L1111.2 292.6 L1111.4 323.1 L1111.6 304.8 L1111.9 312.9 L1112.1 314.4 L1112.3 284.0 L1112.6 292.3 L1112.8 291.2 L1113.1 321.9 L1113.3 334.4 L1113.5 313.9 L1113.8 323.5 L1114.0 327.7 L1114.2 313.0 L1114.5 324.5 L1114.7 324.1 L1114.9 332.7 L1115.2 320.7 L1115.4 360.2 L1115.6 325.6 L1115.9 311.7 L1116.1 333.8 L1116.4 326.2 L1116.6 295.6 L1116.8 330.4 L1117.1 305.8 L1117.3 313.4 L1117.5 332.4 L1117.8 340.9 L1118.0 339.0 L1118.2 315.0 L1118.5 316.4 L1118.7 299.5 L1118.9 317.0 L1119.2 320.7 L1119.4 324.9 L1119.6 302.2 L1119.9 325.2 L1120.1 332.9 L1120.4 292.4 L1120.6 328.7 L1120.8 284.6 L1121.1 296.9 L1121.3 259.5 L1121.5 301.7 L1121.8 282.2 L1122.0 307.4 L1122.2 328.8 L1122.5 334.8 L1122.7 299.2 L1122.9 301.0 L1123.2 327.7 L1123.4 282.6 L1123.7 306.7 L1123.9 322.4 L1124.1 348.1 L1124.4 292.3 L1124.6 311.0 L1124.8 321.4 L1125.1 307.6 L1125.3 331.0 L1125.5 320.4 L1125.8 318.7 L1126.0 282.3 L1126.2 320.1 L1126.5 300.7 L1126.7 303.6 L1126.9 317.8 L1127.2 333.8 L1127.4 289.1 L1127.7 331.5 L1127.9 331.2 L1128.1 281.3 L1128.4 346.3 L1128.6 301.4 L1128.8 283.2 L1129.1 343.1 L1129.3 281.0 L1129.5 320.4 L1129.8 312.2 L1130.0 281.9 L1130.2 347.4 L1130.5 323.2 L1130.7 337.8 L1131.0 288.9 L1131.2 313.7 L1131.4 340.9 L1131.7 341.7 L1131.9 345.2 L1132.1 301.7 L1132.4 307.1 L1132.6 294.5 L1132.8 308.6 L1133.1 312.2 L1133.3 292.1 L1133.5 292.9 L1133.8 323.9 L1134.0 335.6 L1134.2 319.1 L1134.5 283.6 L1134.7 341.2 L1135.0 326.9 L1135.2 290.3 L1135.4 314.4 L1135.7 303.9 L1135.9 333.4 L1136.1 278.6 L1136.4 304.1 L1136.6 316.2 L1136.8 319.0 L1137.1 337.4 L1137.3 309.3 L1137.5 313.7 L1137.8 311.7 L1138.0 293.4 L1138.3 312.1 L1138.5 326.4 L1138.7 260.6 L1139.0 304.4 L1139.2 288.7 L1139.4 306.8 L1139.7 303.4 L1139.9 337.9 L1140.1 298.6 L1140.4 316.1 L1140.6 291.4 L1140.8 284.0 L1141.1 327.3 L1141.3 331.7 L1141.6 309.8 L1141.8 335.3 L1142.0 321.3 L1142.3 324.8 L1142.5 346.2 L1142.7 328.1 L1143.0 328.5 L1143.2 312.9 L1143.4 294.4 L1143.7 335.3 L1143.9 320.9 L1144.1 316.3 L1144.4 336.8 L1144.6 325.2 L1144.8 333.4 L1145.1 326.4 L1145.3 332.9 L1145.6 310.7 L1145.8 309.7 L1146.0 307.0 L1146.3 317.6 L1146.5 317.0 L1146.7 289.8 L1147.0 309.1 L1147.2 293.4 L1147.4 312.2 L1147.7 305.9 L1147.9 332.7 L1148.1 278.9 L1148.4 303.1 L1148.6 301.7 L1148.9 321.4 L1149.1 344.6 L1149.3 311.2 L1149.6 268.2 L1149.8 322.1 L1150.0 319.8 L1150.3 320.8 L1150.5 313.1 L1150.7 337.1 L1151.0 329.3 L1151.2 307.1 L1151.4 299.5 L1151.7 314.5 L1151.9 314.8 L1152.1 287.6 L1152.4 319.8 L1152.6 312.5 L1152.9 285.2 L1153.1 345.8 L1153.3 310.3 L1153.6 316.4 L1153.8 305.8 L1154.0 295.4 L1154.3 309.3 L1154.5 309.1 L1154.7 325.3 L1155.0 318.4 L1155.2 312.6 L1155.4 317.4 L1155.7 336.9 L1155.9 295.7 L1156.2 326.5 L1156.4 330.5 L1156.6 310.9 L1156.9 310.3 L1157.1 297.2 L1157.3 304.6 L1157.6 318.5 L1157.8 318.4 L1158.0 285.4 L1158.3 317.7 L1158.5 302.4 L1158.7 342.5 L1159.0 308.6 L1159.2 313.6 L1159.4 295.9 L1159.7 310.8 L1159.9 308.2 L1160.2 301.1 L1160.4 332.1 L1160.6 327.4 L1160.9 317.2 L1161.1 323.8 L1161.3 305.1 L1161.6 338.7 L1161.8 323.7 L1162.0 313.6 L1162.3 317.2 L1162.5 336.8 L1162.7 352.1 L1163.0 323.1 L1163.2 338.6 L1163.5 319.9 L1163.7 322.6 L1163.9 325.3 L1164.2 270.9 L1164.4 305.5 L1164.6 341.9 L1164.9 308.8 L1165.1 323.7 L1165.3 306.5 L1165.6 310.7 L1165.8 342.3 L1166.0 316.0 L1166.3 327.2 L1166.5 289.9 L1166.8 307.5 L1167.0 296.7 L1167.2 327.5 L1167.5 320.1 L1167.7 313.8 L1167.9 282.5 L1168.2 323.4 L1168.4 311.6 L1168.6 310.7 L1168.9 311.5 L1169.1 313.5 L1169.3 315.0 L1169.6 329.4 L1169.8 305.7 L1170.0 297.6 L1170.3 319.9 L1170.5 316.2 L1170.8 319.3 L1171.0 315.5 L1171.2 308.7 L1171.5 304.3 L1171.7 291.1 L1171.9 285.4 L1172.2 337.9 L1172.4 336.1 L1172.6 318.9 L1172.9 342.6 L1173.1 338.7 L1173.3 339.5 L1173.6 309.2 L1173.8 327.9 L1174.1 324.7 L1174.3 288.2 L1174.5 307.4 L1174.8 324.6 L1175.0 345.3 L1175.2 331.4 L1175.5 297.6 L1175.7 325.7 L1175.9 311.1 L1176.2 297.5 L1176.4 298.5 L1176.6 309.3 L1176.9 312.7 L1177.1 307.4 L1177.3 318.5 L1177.6 327.9 L1177.8 298.2 L1178.1 341.1 L1178.3 319.8 L1178.5 311.4 L1178.8 317.5 L1179.0 315.2 L1179.2 323.5 L1179.5 320.7 L1179.7 329.2 L1179.9 326.4 L1180.2 312.7 L1180.4 319.1 L1180.6 307.0 L1180.9 307.5 L1181.1 316.1 L1181.4 329.7 L1181.6 341.9 L1181.8 310.9 L1182.1 327.9 L1182.3 294.7 L1182.5 316.0 L1182.8 331.5 L1183.0 324.6" fill="none" stroke="#5f89fa" stroke-width="1.3" stroke-opacity="0.94" stroke-linejoin="round"/><path d="M1240.0 367.90000000000003 L1500.0 367.90000000000003" stroke="#5f89fa" stroke-opacity="0.9" stroke-width="1.4" fill="none"/><path d="M1558.0 259.5 L1818.0 367.8 L1558.0 367.8 Z" fill="#5580f8" fill-opacity="0.28"/><path d="M1558.0 259.5 L1818.0 367.8" stroke="#5f89fa" stroke-width="1.25" fill="none"/>
<rect x="1279.2" y="475.1" width="1.9" height="18" fill="#707070"/><rect x="1530.7" y="475.1" width="1.9" height="18" fill="#707070"/><rect x="1631.8" y="13.8" width="238.2" height="31" rx="4.5" fill="#fff" stroke="#d6d6d6" stroke-width="1"/><g fill="none" stroke="#939eb2" stroke-width="1.15" stroke-linecap="round" stroke-linejoin="round" ><path d="M12.1 30.4 L18.6 29.3 L27.9 38.3 L20.3 45.7 L11.3 36.9 Z"/><path d="M25.1 36.3 L18.9 43.1"/><path d="M15.6 32.3 A1.6 1.6 0 1 1 14.6 34.6"/></g><g fill="none" stroke="#939eb2" stroke-width="1.15" stroke-linecap="round" stroke-linejoin="round" ><path d="M11.6 138.3 L27.7 132.9 L25.1 145.9 L19.3 142.3 L16.6 143.6 L16.6 141 Z"/><path d="M19.3 140.1 L23.6 136.4"/></g><g fill="none" stroke="#939eb2" stroke-width="1.15" stroke-linecap="round" stroke-linejoin="round" ><path d="M11.3 237.7 V233.4 H16.7 M22.4 233.4 H27.7 V237.7 M27.7 244.1 V249.4 H22.4 M16.4 249.4 H11.3 V244.1"/><circle cx="19.4" cy="238.7" r="3.3"/><path d="M14.4 246.4 C15 243.6 17 242.1 19.4 242.1 C21.9 242.1 24 243.6 24.6 246.6"/></g><g fill="none" stroke="#939eb2" stroke-width="1.15" stroke-linecap="round" stroke-linejoin="round" ><circle cx="19.4" cy="537.7" r="2.9"/><path d="M14.1 548 C14.1 543.5 16.4 540.9 19.4 540.9 C22.5 540.9 24.9 543.5 24.9 548 Z"/><path d="M15.8 536.5 A2 2 0 1 0 15 540.4"/><path d="M14.6 540.6 C12.6 541.4 11.4 543.2 11.4 545.7"/><path d="M23.1 536.5 A2 2 0 1 1 23.9 540.4"/><path d="M24.3 540.6 C26.4 541.4 27.7 543.2 27.7 545.7"/></g><g fill="none" stroke="#939eb2" stroke-width="1.15" stroke-linecap="round" stroke-linejoin="round" ><path d="M11.3 795.3 A7.7 7.7 0 0 1 18.6 786.8 V795.3 H27.1 A7.9 7.9 0 0 1 20 802.4"/><path d="M21.4 787.1 V792.4 H27 A5.8 5.8 0 0 0 21.4 787.1 Z"/><path d="M11.3 797.5 H18 M12.6 799.9 H18 M13.6 802.4 H18"/></g><g fill="none" stroke="#939eb2" stroke-width="1.15" stroke-linecap="round" stroke-linejoin="round" ><circle cx="19.4" cy="389.7" r="2.8"/><path d="M15.6 387.8 C13.9 387.6 13.1 389 13.2 390.3 C13.3 391.6 14.2 392.5 14.6 394.2"/><path d="M23.3 387.8 C25 387.6 25.8 389 25.7 390.3 C25.6 391.6 24.8 392.5 24.4 394.2"/><path d="M11.3 393.4 V397.4 H16.6 M22.6 397.4 H27.6 V393.4"/></g><path d="M244.7 24.9 L238.5 30.4 L244.7 36.1" fill="none" stroke="#595959" stroke-width="1.7" stroke-linecap="round" stroke-linejoin="round"/><path d="M1847.4 26.5 L1852 32.4 L1856.6 26.5" fill="none" stroke="#c4c4c4" stroke-width="1.3" stroke-linecap="round" stroke-linejoin="round"/><g fill="none" stroke="#4070ff" stroke-width="2.4" stroke-linejoin="round" stroke-linecap="butt"><path d="M1833.8 484.4 V476.1 H1820.5 V490.2 H1828"/></g><g fill="none" stroke="#4070ff" stroke-width="2.1" stroke-linecap="round"><path d="M1824.7 480.6 H1830 M1824.7 485.2 H1830"/></g><g fill="none" stroke="#4070ff" stroke-width="2.3" stroke-linecap="round"><path d="M1829.9 488.9 H1835.2 M1832.6 486.3 V491.7"/></g>
</svg>
<div id="sidetext">
<div class="t" style="left:39.30px;top:27px;font-size:15px;line-height:21px;color:#9fa9bb;letter-spacing:-0.196px;">Tag System</div>
<div class="t" style="left:38.50px;top:128px;font-size:15px;line-height:21px;color:#9fa9bb;letter-spacing:0.535px;">Marketing Models</div>
<div class="t" style="left:38.70px;top:230px;font-size:15px;line-height:21px;color:#9fa9bb;letter-spacing:0.271px;">Model Analysis</div>
<div class="t" style="left:38.50px;top:530px;font-size:15px;line-height:21px;color:#9fa9bb;letter-spacing:0.192px;">Insight Analysis</div>
<div class="t" style="left:39.60px;top:783px;font-size:15px;line-height:21px;color:#9fa9bb;letter-spacing:0.026px;">Analysis Dashboard</div>
<div class="t" style="left:41.80px;top:73px;font-size:17.5px;line-height:24px;color:#5e5e5e;letter-spacing:0.318px;">Tag Management</div>
<div class="t" style="left:41.90px;top:175px;font-size:17.5px;line-height:24px;color:#5f82fd;letter-spacing:0.763px;">Model Hub</div>
<div class="t" style="left:41.90px;top:276px;font-size:17.5px;line-height:24px;color:#5e5e5e;letter-spacing:0.463px;">Multidimensional...</div>
<div class="t" style="left:41.90px;top:327px;font-size:17.5px;line-height:24px;color:#5e5e5e;letter-spacing:0.032px;">Perspective Analy...</div>
<div class="t" style="left:41.90px;top:424px;font-size:17.5px;line-height:24px;color:#5e5e5e;letter-spacing:0.463px;">Multidimensional...</div>
<div class="t" style="left:41.90px;top:475px;font-size:17.5px;line-height:24px;color:#5e5e5e;letter-spacing:0.032px;">Perspective Analy...</div>
<div class="t" style="left:42.10px;top:577px;font-size:17.5px;line-height:24px;color:#5e5e5e;letter-spacing:0.167px;">Group Filter</div>
<div class="t" style="left:42.10px;top:627px;font-size:17.5px;line-height:24px;color:#5e5e5e;letter-spacing:0.372px;">Group Manage</div>
<div class="t" style="left:42.10px;top:677px;font-size:17.5px;line-height:24px;color:#5e5e5e;letter-spacing:0.156px;">Group Analyze</div>
<div class="t" style="left:42.40px;top:728px;font-size:17.5px;line-height:24px;color:#5e5e5e;letter-spacing:0.056px;">Self-service Analy...</div>
<div class="t" style="left:42.10px;top:830px;font-size:17.5px;line-height:24px;color:#5e5e5e;letter-spacing:0.191px;">Custom Dashboard</div>
<div class="t" style="left:41.90px;top:880px;font-size:17.5px;line-height:24px;color:#5e5e5e;letter-spacing:0.015px;">Business Insight</div>
<div class="t" style="left:42.10px;top:930px;font-size:17.5px;line-height:24px;color:#5e5e5e;letter-spacing:0.4px;">Custom Menu</div>
<div class="abs" style="left:30px;top:380px;width:170px;height:11.7px;overflow:hidden;"><div class="t" style="left:8.50px;top:1.00px;font-size:15px;line-height:21px;color:#9fa9bb;letter-spacing:0.192px;">Insight Analysis</div></div><div class="abs" style="left:30px;top:391.7px;width:170px;height:8.3px;overflow:hidden;"><div class="t" style="left:8.50px;top:-13.70px;font-size:15px;line-height:21px;color:#9fa9bb;letter-spacing:0.192px;">Insight Analysis</div></div>
</div>
<div id="maintext" class="abs" style="left:0;top:0;width:1871px;height:980px;will-change:transform;">
<div class="t" style="left:255.20px;top:19px;font-size:18px;line-height:24px;color:#5c5c5c;letter-spacing:-0.143px;">Return</div>
<div class="t" style="left:1516.40px;top:17px;font-size:18.5px;line-height:25px;color:#2e2e2e;letter-spacing:-0.663px;">RFM Dataset</div>
<div class="t" style="left:1645.70px;top:19px;font-size:15px;line-height:21px;color:#3a3a3a;letter-spacing:-0.162px;">testRFM</div>
<div class="t" style="left:268.50px;top:100px;font-size:20px;line-height:26px;color:#222222;letter-spacing:0.219px;font-weight:700;">Core Metric</div>
<div class="t" style="left:259.40px;top:166px;font-size:17px;line-height:23px;color:#646464;letter-spacing:0.451px;">transaction User Count</div>
<div class="t" style="left:576.90px;top:166px;font-size:17px;line-height:23px;color:#646464;letter-spacing:0.549px;">Transaction Amount</div>
<div class="t" style="left:894.90px;top:166px;font-size:17px;line-height:23px;color:#646464;letter-spacing:0.517px;">Transaction Amount per capita</div>
<div class="t" style="left:1212.30px;top:166px;font-size:17px;line-height:23px;color:#646464;letter-spacing:0.321px;">Transaction Frequency per capita</div>
<div class="t" style="left:1529.30px;top:166px;font-size:17px;line-height:23px;color:#646464;letter-spacing:0.239px;">Transaction Recency per capita</div>
<div class="t" style="left:259.30px;top:195px;font-size:31px;line-height:39px;color:#5e5e5e;letter-spacing:-0.955px;">18,000</div>
<div class="t" style="left:576.90px;top:195px;font-size:31px;line-height:39px;color:#5e5e5e;letter-spacing:-0.715px;">740,294,039</div>
<div class="t" style="left:894.90px;top:195px;font-size:31px;line-height:39px;color:#5e5e5e;letter-spacing:-0.846px;">41,127.45</div>
<div class="t" style="left:1212.00px;top:195px;font-size:31px;line-height:39px;color:#5e5e5e;letter-spacing:0px;">1</div>
<div class="t" style="left:1528.70px;top:195px;font-size:31px;line-height:39px;color:#5e5e5e;letter-spacing:-0.735px;">614.35</div>
<div class="t" style="left:260.40px;top:371px;font-size:9.9px;line-height:15px;color:#a8a8a8;letter-spacing:-0.41px;">Feb 01, 2022</div>
<div class="t" style="left:347.10px;top:371px;font-size:9.9px;line-height:15px;color:#a8a8a8;letter-spacing:-0.501px;">Feb 04, 2023</div>
<div class="t" style="left:433.80px;top:371px;font-size:9.9px;line-height:15px;color:#a8a8a8;letter-spacing:-0.501px;">Feb 07, 2024</div>
<div class="t" style="left:520.50px;top:371px;font-size:9.9px;line-height:15px;color:#a8a8a8;letter-spacing:-0.501px;">Feb 10, 2025</div>
<div class="t" style="left:578.40px;top:371px;font-size:9.9px;line-height:15px;color:#a8a8a8;letter-spacing:-0.41px;">Feb 01, 2022</div>
<div class="t" style="left:665.10px;top:371px;font-size:9.9px;line-height:15px;color:#a8a8a8;letter-spacing:-0.501px;">Feb 04, 2023</div>
<div class="t" style="left:751.80px;top:371px;font-size:9.9px;line-height:15px;color:#a8a8a8;letter-spacing:-0.501px;">Feb 07, 2024</div>
<div class="t" style="left:838.50px;top:371px;font-size:9.9px;line-height:15px;color:#a8a8a8;letter-spacing:-0.501px;">Feb 10, 2025</div>
<div class="t" style="left:896.40px;top:371px;font-size:9.9px;line-height:15px;color:#a8a8a8;letter-spacing:-0.41px;">Feb 01, 2022</div>
<div class="t" style="left:983.10px;top:371px;font-size:9.9px;line-height:15px;color:#a8a8a8;letter-spacing:-0.501px;">Feb 04, 2023</div>
<div class="t" style="left:1069.80px;top:371px;font-size:9.9px;line-height:15px;color:#a8a8a8;letter-spacing:-0.501px;">Feb 07, 2024</div>
<div class="t" style="left:1156.50px;top:371px;font-size:9.9px;line-height:15px;color:#a8a8a8;letter-spacing:-0.501px;">Feb 10, 2025</div>
<div class="t" style="left:1213.40px;top:371px;font-size:9.9px;line-height:15px;color:#a8a8a8;letter-spacing:-0.41px;">Feb 01, 2022</div>
<div class="t" style="left:1300.10px;top:371px;font-size:9.9px;line-height:15px;color:#a8a8a8;letter-spacing:-0.501px;">Feb 04, 2023</div>
<div class="t" style="left:1386.80px;top:371px;font-size:9.9px;line-height:15px;color:#a8a8a8;letter-spacing:-0.501px;">Feb 07, 2024</div>
<div class="t" style="left:1473.50px;top:371px;font-size:9.9px;line-height:15px;color:#a8a8a8;letter-spacing:-0.501px;">Feb 10, 2025</div>
<div class="t" style="left:1531.40px;top:371px;font-size:9.9px;line-height:15px;color:#a8a8a8;letter-spacing:-0.41px;">Feb 01, 2022</div>
<div class="t" style="left:1618.10px;top:371px;font-size:9.9px;line-height:15px;color:#a8a8a8;letter-spacing:-0.501px;">Feb 04, 2023</div>
<div class="t" style="left:1704.80px;top:371px;font-size:9.9px;line-height:15px;color:#a8a8a8;letter-spacing:-0.501px;">Feb 07, 2024</div>
<div class="t" style="left:1791.50px;top:371px;font-size:9.9px;line-height:15px;color:#a8a8a8;letter-spacing:-0.501px;">Feb 10, 2025</div>
<div class="t" style="left:268.30px;top:470px;font-size:20px;line-height:26px;color:#1c1c1c;letter-spacing:0.105px;font-weight:700;">RFM User Composition</div>
<div class="t" style="left:1069.60px;top:471px;font-size:17.5px;line-height:24px;color:#146aff;letter-spacing:0.11px;font-weight:700;">User number ( Person )</div>
<div class="t" style="left:1295.30px;top:471px;font-size:17.5px;line-height:24px;color:#717171;letter-spacing:0.14px;font-weight:700;">Consume Amount ( Yuan )</div>
<div class="t" style="left:1547.20px;top:471px;font-size:17.5px;line-height:24px;color:#717171;letter-spacing:-0.041px;font-weight:700;">Consume Frequency ( Times )</div>
<div class="t" style="left:498.30px;top:667px;font-size:16px;line-height:21px;color:#f4f7fe;letter-spacing:0.067px;">General Value Customer: 4,810</div>
<div class="t" style="left:1302.30px;top:580px;font-size:16px;line-height:21px;color:#f4f7fe;letter-spacing:0.187px;">High Value Customer: 2,379</div>
<div class="t" style="left:1263.00px;top:724px;font-size:16px;line-height:21px;color:#f4f7fe;letter-spacing:0.237px;">Focus on maintaining Customer: 3,629</div>
<div class="t" style="left:915.40px;top:907px;font-size:16px;line-height:21px;color:#f4f7fe;letter-spacing:0.211px;">General maintaining Customer: 7,182</div>
</div>
<div class="abs" style="left:0;top:976px;width:1871px;height:1px;background:rgba(60,60,60,.25);"></div>
<div class="abs" style="left:0;top:977px;width:1871px;height:3px;background:linear-gradient(#2a2a2a 0,#2b2b2b 1px,#363636 1.6px);"></div>
</body></html>
